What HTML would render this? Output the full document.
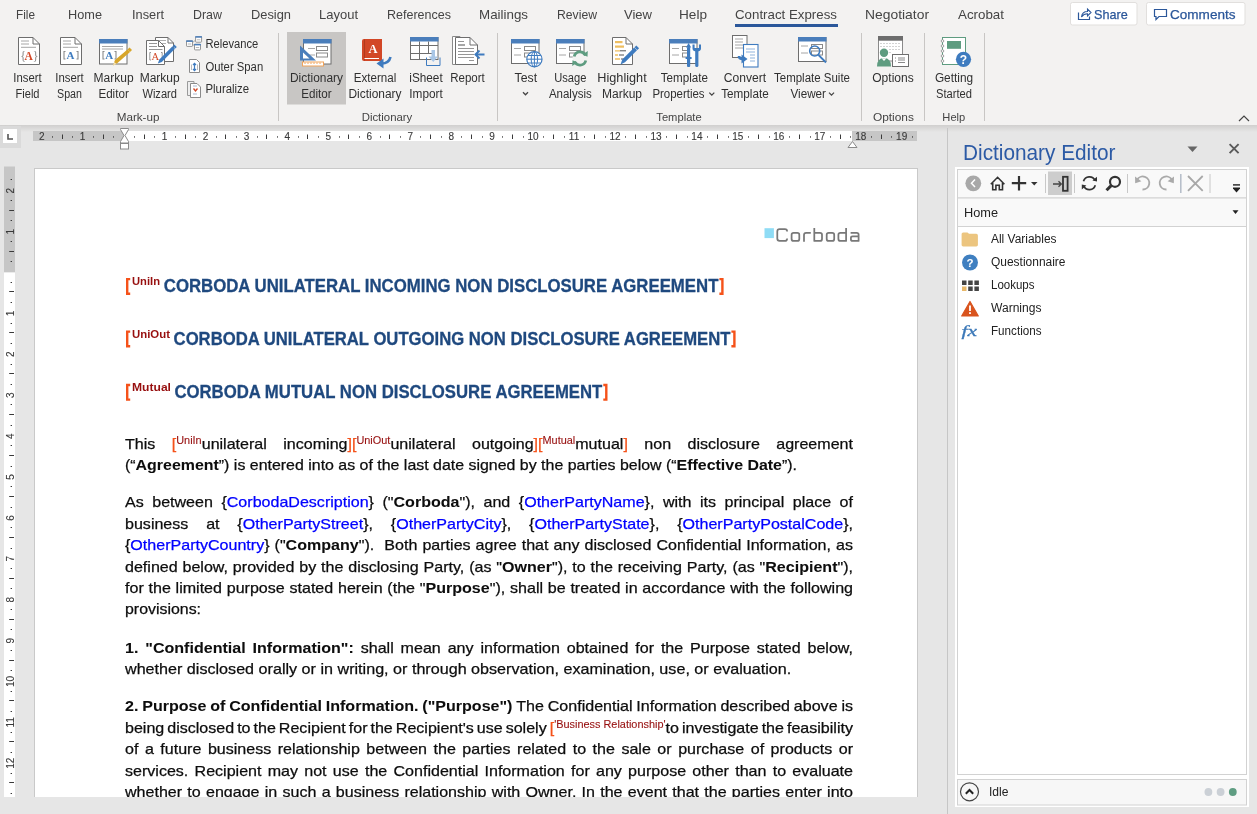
<!DOCTYPE html>
<html><head><meta charset="utf-8"><title>Word</title><style>
html,body{margin:0;padding:0;background:#e6e6e6;overflow:hidden;width:1257px;height:814px}
svg{display:block;font-family:"Liberation Sans",sans-serif;will-change:transform}
</style></head><body>
<svg width="1257" height="814" viewBox="0 0 1257 814">
<rect x="0" y="0" width="1257" height="125" fill="#f3f2f1"/>
<rect x="0" y="125" width="1257" height="689" fill="#e6e6e6"/>
<defs><linearGradient id="shd" x1="0" y1="0" x2="0" y2="1"><stop offset="0" stop-color="#d0cfce"/><stop offset="1" stop-color="#e6e6e6"/></linearGradient></defs>
<rect x="0" y="125" width="1257" height="7" fill="url(#shd)"/>
<text x="16" y="19" font-size="12.6" fill="#444444" textLength="19.00" lengthAdjust="spacingAndGlyphs">File</text>
<text x="68" y="19" font-size="12.6" fill="#444444" textLength="34.00" lengthAdjust="spacingAndGlyphs">Home</text>
<text x="132" y="19" font-size="12.6" fill="#444444" textLength="32.00" lengthAdjust="spacingAndGlyphs">Insert</text>
<text x="193" y="19" font-size="12.6" fill="#444444" textLength="29.00" lengthAdjust="spacingAndGlyphs">Draw</text>
<text x="251" y="19" font-size="12.6" fill="#444444" textLength="40.00" lengthAdjust="spacingAndGlyphs">Design</text>
<text x="319" y="19" font-size="12.6" fill="#444444" textLength="39.00" lengthAdjust="spacingAndGlyphs">Layout</text>
<text x="387" y="19" font-size="12.6" fill="#444444" textLength="64.00" lengthAdjust="spacingAndGlyphs">References</text>
<text x="479" y="19" font-size="12.6" fill="#444444" textLength="49.00" lengthAdjust="spacingAndGlyphs">Mailings</text>
<text x="557" y="19" font-size="12.6" fill="#444444" textLength="40.00" lengthAdjust="spacingAndGlyphs">Review</text>
<text x="624" y="19" font-size="12.6" fill="#444444" textLength="28.00" lengthAdjust="spacingAndGlyphs">View</text>
<text x="679" y="19" font-size="12.6" fill="#444444" textLength="28.00" lengthAdjust="spacingAndGlyphs">Help</text>
<text x="735" y="19" font-size="12.6" fill="#444444" textLength="102.00" lengthAdjust="spacingAndGlyphs">Contract Express</text>
<text x="865" y="19" font-size="12.6" fill="#444444" textLength="64.00" lengthAdjust="spacingAndGlyphs">Negotiator</text>
<text x="958" y="19" font-size="12.6" fill="#444444" textLength="46.00" lengthAdjust="spacingAndGlyphs">Acrobat</text>
<rect x="735" y="24" width="103" height="3" fill="#2b579a"/>
<rect x="1070.5" y="2.5" width="66.5" height="22.5" fill="#ffffff" stroke="#e1dfdd" stroke-width="1" rx="2"/>
<rect x="1146.5" y="2.5" width="98.5" height="22.5" fill="#ffffff" stroke="#e1dfdd" stroke-width="1" rx="2"/>
<text x="1094" y="18.8" font-size="12.8" fill="#2b579a" textLength="33.70" lengthAdjust="spacingAndGlyphs" stroke="#2b579a" stroke-width="0.25">Share</text>
<text x="1170" y="18.8" font-size="12.8" fill="#2b579a" textLength="65.50" lengthAdjust="spacingAndGlyphs" stroke="#2b579a" stroke-width="0.25">Comments</text>
<path d="M1078.5,12.5 V19.5 H1089.5 V16.5" fill="none" stroke="#2b579a" stroke-width="1.2"/>
<path d="M1081.5,17 C1082,13 1084.5,11.5 1087.5,11.5 V9 L1091,12.5 L1087.5,16 V13.8 C1085,13.8 1083,14.8 1081.5,17 Z" fill="none" stroke="#2b579a" stroke-width="1.1"/>
<path d="M1154.5,9.5 H1166.5 V16.5 H1159 L1156,19.5 V16.5 H1154.5 Z" fill="none" stroke="#2b579a" stroke-width="1.2"/>
<rect x="287" y="32" width="59" height="72.5" fill="#c8c6c4"/>
<text x="13.35" y="81.6" font-size="12" fill="#303030" textLength="28.30" lengthAdjust="spacingAndGlyphs">Insert</text>
<text x="15.5" y="97.8" font-size="12" fill="#303030" textLength="24.00" lengthAdjust="spacingAndGlyphs">Field</text>
<text x="55.3" y="81.6" font-size="12" fill="#303030" textLength="28.40" lengthAdjust="spacingAndGlyphs">Insert</text>
<text x="57.05" y="97.8" font-size="12" fill="#303030" textLength="24.90" lengthAdjust="spacingAndGlyphs">Span</text>
<text x="93.6" y="81.6" font-size="12" fill="#303030" textLength="40.00" lengthAdjust="spacingAndGlyphs">Markup</text>
<text x="98.39999999999999" y="97.8" font-size="12" fill="#303030" textLength="30.40" lengthAdjust="spacingAndGlyphs">Editor</text>
<text x="139.7" y="81.6" font-size="12" fill="#303030" textLength="40.00" lengthAdjust="spacingAndGlyphs">Markup</text>
<text x="142.45" y="97.8" font-size="12" fill="#303030" textLength="34.50" lengthAdjust="spacingAndGlyphs">Wizard</text>
<text x="290.0" y="81.6" font-size="12" fill="#303030" textLength="53.00" lengthAdjust="spacingAndGlyphs">Dictionary</text>
<text x="301.3" y="97.8" font-size="12" fill="#303030" textLength="30.40" lengthAdjust="spacingAndGlyphs">Editor</text>
<text x="353.75" y="81.6" font-size="12" fill="#303030" textLength="42.50" lengthAdjust="spacingAndGlyphs">External</text>
<text x="348.5" y="97.8" font-size="12" fill="#303030" textLength="53.00" lengthAdjust="spacingAndGlyphs">Dictionary</text>
<text x="409.3" y="81.6" font-size="12" fill="#303030" textLength="33.40" lengthAdjust="spacingAndGlyphs">iSheet</text>
<text x="409.25" y="97.8" font-size="12" fill="#303030" textLength="33.50" lengthAdjust="spacingAndGlyphs">Import</text>
<text x="450.25" y="81.6" font-size="12" fill="#303030" textLength="34.50" lengthAdjust="spacingAndGlyphs">Report</text>
<text x="514.55" y="81.6" font-size="12" fill="#303030" textLength="22.50" lengthAdjust="spacingAndGlyphs">Test</text>
<text x="554.1999999999999" y="81.6" font-size="12" fill="#303030" textLength="32.20" lengthAdjust="spacingAndGlyphs">Usage</text>
<text x="548.9" y="97.8" font-size="12" fill="#303030" textLength="42.80" lengthAdjust="spacingAndGlyphs">Analysis</text>
<text x="597.3" y="81.6" font-size="12" fill="#303030" textLength="49.40" lengthAdjust="spacingAndGlyphs">Highlight</text>
<text x="602.0" y="97.8" font-size="12" fill="#303030" textLength="40.00" lengthAdjust="spacingAndGlyphs">Markup</text>
<text x="660.8" y="81.6" font-size="12" fill="#303030" textLength="47.20" lengthAdjust="spacingAndGlyphs">Template</text>
<text x="723.85" y="81.6" font-size="12" fill="#303030" textLength="42.30" lengthAdjust="spacingAndGlyphs">Convert</text>
<text x="721.25" y="97.8" font-size="12" fill="#303030" textLength="47.50" lengthAdjust="spacingAndGlyphs">Template</text>
<text x="774.0" y="81.6" font-size="12" fill="#303030" textLength="76.00" lengthAdjust="spacingAndGlyphs">Template Suite</text>
<text x="872.25" y="81.6" font-size="12" fill="#303030" textLength="41.50" lengthAdjust="spacingAndGlyphs">Options</text>
<text x="934.9" y="81.6" font-size="12" fill="#303030" textLength="38.20" lengthAdjust="spacingAndGlyphs">Getting</text>
<text x="936.0" y="97.8" font-size="12" fill="#303030" textLength="36.00" lengthAdjust="spacingAndGlyphs">Started</text>
<text x="652.4" y="97.8" font-size="12" fill="#303030" textLength="52.20" lengthAdjust="spacingAndGlyphs">Properties</text>
<path d="M709.3,92.6 L711.8,95.1 L714.3,92.6" fill="none" stroke="#444" stroke-width="1.3"/>
<text x="790.5" y="97.8" font-size="12" fill="#303030" textLength="35.50" lengthAdjust="spacingAndGlyphs">Viewer</text>
<path d="M829,92.6 L831.5,95.1 L834,92.6" fill="none" stroke="#444" stroke-width="1.3"/>
<path d="M523,92.3 L525.5,94.8 L528,92.3" fill="none" stroke="#444" stroke-width="1.3"/>
<text x="205.4" y="47.9" font-size="12" fill="#303030" textLength="52.90" lengthAdjust="spacingAndGlyphs">Relevance</text>
<text x="205.4" y="70.6" font-size="12" fill="#303030" textLength="57.80" lengthAdjust="spacingAndGlyphs">Outer Span</text>
<text x="205.4" y="93.2" font-size="12" fill="#303030" textLength="43.80" lengthAdjust="spacingAndGlyphs">Pluralize</text>
<text x="116.69999999999999" y="120.7" font-size="11" fill="#444444" textLength="42.80" lengthAdjust="spacingAndGlyphs">Mark-up</text>
<text x="361.7" y="120.7" font-size="11" fill="#444444" textLength="50.60" lengthAdjust="spacingAndGlyphs">Dictionary</text>
<text x="656.3" y="120.7" font-size="11" fill="#444444" textLength="45.40" lengthAdjust="spacingAndGlyphs">Template</text>
<text x="872.9" y="120.7" font-size="11" fill="#444444" textLength="41.00" lengthAdjust="spacingAndGlyphs">Options</text>
<text x="942.3499999999999" y="120.7" font-size="11" fill="#444444" textLength="22.90" lengthAdjust="spacingAndGlyphs">Help</text>
<line x1="278.5" y1="33" x2="278.5" y2="121" stroke="#c8c6c4" stroke-width="1"/>
<line x1="497.5" y1="33" x2="497.5" y2="121" stroke="#c8c6c4" stroke-width="1"/>
<line x1="861.5" y1="33" x2="861.5" y2="121" stroke="#c8c6c4" stroke-width="1"/>
<line x1="924.5" y1="33" x2="924.5" y2="121" stroke="#c8c6c4" stroke-width="1"/>
<line x1="984.5" y1="33" x2="984.5" y2="121" stroke="#c8c6c4" stroke-width="1"/>
<path d="M1239,121 L1244,116 L1249,121" fill="none" stroke="#444" stroke-width="1.2"/>
<g id="ic-insertfield">
<path d="M18.5,37.5 H33 L39.5,44 V64.5 H18.5 Z" fill="#fff" stroke="#6e6e6e" stroke-width="1"/>
<path d="M33,37.5 V44 H39.5" fill="none" stroke="#6e6e6e" stroke-width="1"/>
<path d="M21,41 H29 M21,44 H29 M21,47.3 H36" stroke="#a6a6a6" stroke-width="1"/>
<text x="20.3" y="59.5" font-family="Liberation Serif" font-size="12" fill="#8c8c8c">{</text>
<text x="24.6" y="59.5" font-family="Liberation Serif" font-size="11.5" font-weight="bold" fill="#d24726">A</text>
<text x="32.8" y="59.5" font-family="Liberation Serif" font-size="12" fill="#8c8c8c">}</text>
</g>
<g id="ic-insertspan">
<path d="M60.5,37.5 H75 L81.5,44 V64.5 H60.5 Z" fill="#fff" stroke="#6e6e6e" stroke-width="1"/>
<path d="M75,37.5 V44 H81.5" fill="none" stroke="#6e6e6e" stroke-width="1"/>
<path d="M63,41 H71 M63,44 H71 M63,47.3 H78" stroke="#a6a6a6" stroke-width="1"/>
<path d="M65.5,51.5 H64 V59 H65.5 M76.5,51.5 H78 V59 H76.5" fill="none" stroke="#8c8c8c" stroke-width="1.1"/>
<text x="66.5" y="59" font-family="Liberation Serif" font-size="11" font-weight="bold" fill="#3e7bbf">A</text>
</g>
<g id="ic-markupeditor">
<rect x="99.5" y="39.5" width="27.5" height="24.5" fill="#fff" stroke="#6e6e6e" stroke-width="1"/>
<rect x="99" y="39" width="28.5" height="4.5" fill="#4a7ebb"/>
<path d="M102,46.5 H123 M102,49 H123" stroke="#a6a6a6" stroke-width="1"/>
<path d="M104.5,51.5 H103 V59 H104.5 M114.5,51.5 H116 V59 H114.5" fill="none" stroke="#8c8c8c" stroke-width="1.1"/>
<text x="105.3" y="59" font-family="Liberation Serif" font-size="11" font-weight="bold" fill="#3e7bbf">A</text>
<path d="M113,65.5 L115,60 L127.5,49.5 L130,52 L117.5,63 Z" fill="#d8a62a"/>
<path d="M127.5,49.5 L129.5,47.5 L132,50 L130,52 Z" fill="#d8a62a"/>
<path d="M113,65.5 L114.2,62 L116.5,64 Z" fill="#f3e2b5"/>
</g>
<g id="ic-markupwizard">
<path d="M155.5,37.5 H168 L173.5,43 V61.5 H155.5 Z" fill="#fff" stroke="#6e6e6e" stroke-width="1"/>
<path d="M168,37.5 V43 H173.5" fill="none" stroke="#6e6e6e" stroke-width="1"/>
<path d="M159,40.5 H166 M159,43.5 H166" stroke="#a6a6a6" stroke-width="0.9"/>
<path d="M146.5,40.5 H158.5 L164.5,46.5 V64.5 H146.5 Z" fill="#fff" stroke="#6e6e6e" stroke-width="1"/>
<path d="M158.5,40.5 V46.5 H164.5" fill="none" stroke="#6e6e6e" stroke-width="1"/>
<path d="M149,43.5 H157 M149,46.5 H157 M149,49.5 H162.5" stroke="#8a8a8a" stroke-width="0.9"/>
<path d="M151,52.5 H149.8 V60 H151 M161,52.5 H162.2 V60 H161" fill="none" stroke="#8c8c8c" stroke-width="0.9"/>
<text x="151.6" y="59.8" font-family="Liberation Serif" font-size="10.5" fill="#d24726">A</text>
<path d="M157.8,63.5 L159.3,59.5 L172.5,46.3 L175,48.8 L161.8,62 Z" fill="#3e7bbf"/>
<path d="M172.8,46 L174.3,44.5 L176.8,47 L175.3,48.5 Z" fill="#3e7bbf"/>
</g>
<g id="ic-relevance">
<rect x="186.5" y="40.8" width="6" height="5.6" rx="0.6" fill="#fff" stroke="#8a8a8a" stroke-width="0.9"/>
<rect x="186.1" y="40.4" width="6.8" height="1.5" fill="#4a7ebb"/>
<path d="M187.8,44 H191.2" stroke="#b0b0b0" stroke-width="0.9"/>
<rect x="195.6" y="36.6" width="6" height="5.6" rx="0.6" fill="#fff" stroke="#8a8a8a" stroke-width="0.9"/>
<rect x="195.2" y="36.2" width="6.8" height="1.5" fill="#4a7ebb"/>
<path d="M196.9,39.8 H200.3" stroke="#b0b0b0" stroke-width="0.9"/>
<rect x="194.5" y="44.3" width="6" height="5.6" rx="0.6" fill="#fff" stroke="#8a8a8a" stroke-width="0.9"/>
<rect x="194.1" y="43.9" width="6.8" height="1.5" fill="#4a7ebb"/>
<path d="M195.8,47.5 H199.2" stroke="#b0b0b0" stroke-width="0.9"/>
<path d="M192.6,42.5 L195.5,40.2 M192.6,44 L194.4,46" fill="none" stroke="#9a9a9a" stroke-width="0.8"/>
</g>
<g id="ic-outerspan">
<path d="M189.5,59.5 H196.5 L199.5,62.5 V72.5 H189.5 Z" fill="#fff" stroke="#8a8a8a" stroke-width="1"/>
<path d="M191.5,64.5 V70 M197.5,64.5 V70" stroke="#aaa" stroke-width="0.8"/>
<path d="M194.5,63.5 V70.5 M193,65 L194.5,63.3 L196,65 M193,69 L194.5,70.7 L196,69" fill="none" stroke="#3e7bbf" stroke-width="1.2"/>
</g>
<g id="ic-pluralize">
<path d="M187.5,81.5 H194 V95.5 H187.5 Z" fill="#eee" stroke="#9a9a9a" stroke-width="1"/>
<path d="M190.5,83.5 H197 L200.5,87 V97.5 H190.5 Z" fill="#fff" stroke="#8a8a8a" stroke-width="1"/>
<path d="M193.5,88.5 L195.5,91 L197.5,88.5" fill="none" stroke="#d24726" stroke-width="1.3"/>
<path d="M193,86 H197 M193,94 H197" stroke="#a9b8d0" stroke-width="1"/>
</g>
<g id="ic-dicteditor">
<rect x="303.5" y="39.5" width="27.5" height="24.5" fill="#fff" stroke="#6e6e6e" stroke-width="1"/>
<rect x="303" y="39" width="28.5" height="4.5" fill="#4a7ebb"/>
<path d="M308,48.5 H315 M308,55 H315" stroke="#a6a6a6" stroke-width="1"/>
<rect x="316.5" y="46.5" width="11" height="4" fill="#fff" stroke="#8a8a8a" stroke-width="1"/>
<rect x="316.5" y="53" width="11" height="4" fill="#fff" stroke="#8a8a8a" stroke-width="1"/>
<path d="M300,45.5 L316,60.5 H300 Z" fill="#4a7ebb"/>
<path d="M303,52.5 L309.5,58.5 H303 Z" fill="#fff"/>
<rect x="302" y="61.5" width="22" height="5" fill="#f0a35a"/>
<rect x="303" y="62.5" width="20" height="3" fill="#fff"/>
<path d="M305,62.5 V64 M308,62.5 V64 M311,62.5 V64 M314,62.5 V64 M317,62.5 V64 M320,62.5 V64" stroke="#f0a35a" stroke-width="1"/>
</g>
<g id="ic-extdict">
<path d="M364,39 H382 V61 H364 Q362,61 362,59 V41 Q362,39 364,39 Z" fill="#d24726"/><path d="M364.5,39.5 V60.5" stroke="#b03a1c" stroke-width="1"/>
<path d="M364.5,58.5 H379" stroke="#fff" stroke-width="1"/>
<text x="368.5" y="52.5" font-family="Liberation Serif" font-size="12.5" font-weight="bold" fill="#fff">A</text>
<path d="M390.5,57 Q389,63.5 381.5,63.5" fill="none" stroke="#3e7bbf" stroke-width="2.6"/>
<path d="M383.5,58.5 L376.5,63.5 L383.5,68.5 Z" fill="#3e7bbf"/>
</g>
<g id="ic-isheet">
<rect x="410.5" y="37.5" width="27.5" height="22" fill="#fff" stroke="#6e6e6e" stroke-width="1"/>
<rect x="410" y="37" width="28.5" height="4.5" fill="#4a7ebb"/>
<path d="M410.5,45.5 H438 M410.5,53.5 H432 M419.5,41.5 V59.5 M428.5,41.5 V53.5" stroke="#6e6e6e" stroke-width="1"/>
<path d="M426.5,57.5 V65.5 H440 V57.5" fill="none" stroke="#3e7bbf" stroke-width="1"/>
<path d="M431.5,50 H435 V56.5 H438 L433.25,62 L428.5,56.5 H431.5 Z" fill="#a8c6e6"/>
</g>
<g id="ic-report">
<path d="M452.5,36.5 H460 V64.5 H452.5 Z" fill="#fff" stroke="#8a8a8a" stroke-width="1"/>
<path d="M455.5,37.5 H470 L477.5,45 V64.5 H455.5 Z" fill="#fff" stroke="#6e6e6e" stroke-width="1"/>
<path d="M470,37.5 V45 H477.5" fill="none" stroke="#6e6e6e" stroke-width="1"/>
<path d="M458,41.5 H464 M458,48.5 H474 M458,51.5 H474 M458,54.5 H474 M458,57.5 H474 M469,60.5 H474" stroke="#8a8a8a" stroke-width="0.9"/><rect x="458" y="44" width="7" height="2" fill="#a6a6a6"/>
<path d="M484.5,54.5 H476" stroke="#3e7bbf" stroke-width="2"/>
<path d="M479.5,50.5 L475.5,54.5 L479.5,58.5" fill="none" stroke="#3e7bbf" stroke-width="2"/>
</g>
<g id="ic-test">
<rect x="511.5" y="39.5" width="27.5" height="24" fill="#fff" stroke="#6e6e6e" stroke-width="1"/>
<rect x="511" y="39" width="28.5" height="4.5" fill="#4a7ebb"/>
<path d="M514,48.5 H521 M514,55 H521" stroke="#a6a6a6" stroke-width="1"/>
<rect x="524.5" y="46.5" width="11" height="4" fill="#fff" stroke="#8a8a8a" stroke-width="1"/>
<rect x="524.5" y="53" width="7" height="4" fill="#fff" stroke="#8a8a8a" stroke-width="1"/>
<circle cx="534.4" cy="59.2" r="7.6" fill="#fff" stroke="#3e7bbf" stroke-width="1.2"/>
<ellipse cx="534.4" cy="59.2" rx="3.2" ry="7.6" fill="none" stroke="#3e7bbf" stroke-width="1"/>
<path d="M526.8,59.2 H542 M528,55.5 H540.8 M528,63 H540.8 M534.4,51.6 V66.8" stroke="#3e7bbf" stroke-width="1"/>
</g>
<g id="ic-usage">
<rect x="556.5" y="39.5" width="27.5" height="24" fill="#fff" stroke="#6e6e6e" stroke-width="1"/>
<rect x="556" y="39" width="28.5" height="4.5" fill="#4a7ebb"/>
<path d="M559,48.5 H566 M559,55 H566" stroke="#a6a6a6" stroke-width="1"/>
<rect x="569.5" y="46.5" width="11" height="4" fill="#fff" stroke="#8a8a8a" stroke-width="1"/>
<rect x="569.5" y="53" width="7" height="4" fill="#fff" stroke="#8a8a8a" stroke-width="1"/>
<circle cx="580" cy="58.5" r="7.5" fill="#f3f2f1"/>
<path d="M574.2,56.5 A6,6 0 0 1 585.5,55.5 M585.8,60.5 A6,6 0 0 1 574.5,61.5" fill="none" stroke="#5e9c80" stroke-width="2.8"/>
<path d="M582.5,54.5 L587.5,56.8 L587.8,51 Z M577.5,62.5 L572.5,60.2 L572.2,66 Z" fill="#5e9c80"/>
</g>
<g id="ic-highlight">
<path d="M612.5,37.5 H626 L632.5,44 V64.5 H612.5 Z" fill="#fff" stroke="#6e6e6e" stroke-width="1"/>
<path d="M626,37.5 V44 H632.5" fill="none" stroke="#6e6e6e" stroke-width="1"/>
<rect x="615" y="41" width="7.5" height="2.2" fill="#eebe60"/>
<rect x="615" y="45.5" width="9" height="2.2" fill="#eebe60"/>
<path d="M615,50.8 H620 M615,55 H618 M615,59 H620" stroke="#eebe60" stroke-width="1.3"/>
<path d="M620,50.8 H626 M619,55 H624 M621,59 H626" stroke="#555" stroke-width="1"/>
<path d="M620.5,64.5 L622.3,59.5 L634.2,47.5 L637,50.3 L625,62.2 Z" fill="#3e7bbf"/>
<path d="M634.5,47.2 L636.3,45.4 L639.1,48.2 L637.3,50 Z" fill="#3e7bbf"/>
</g>
<g id="ic-tprops">
<rect x="669.5" y="39.5" width="27.5" height="24" fill="#fff" stroke="#6e6e6e" stroke-width="1"/>
<rect x="669" y="39" width="28.5" height="4.5" fill="#4a7ebb"/>
<path d="M672,48.5 H679 M672,55 H679" stroke="#a6a6a6" stroke-width="1"/>
<rect x="682.5" y="46.5" width="6" height="4" fill="#fff" stroke="#8a8a8a" stroke-width="1"/>
<rect x="682.5" y="53" width="6" height="4" fill="#fff" stroke="#8a8a8a" stroke-width="1"/>
<rect x="687" y="47" width="3.2" height="20" rx="1" fill="#3e7bbf"/>
<path d="M686,47.5 L688.6,43 L691.2,47.5 Z" fill="#3e7bbf"/>
<rect x="685.6" y="57" width="6" height="2" fill="#3e7bbf"/>
<rect x="695.2" y="49" width="3.2" height="18" rx="1.5" fill="#3e7bbf"/>
<path d="M692.5,44.5 V48.5 Q692.5,51.5 696.8,51.5 Q701,51.5 701,48.5 V44.5 L699,44.5 V48 H694.6 V44.5 Z" fill="#3e7bbf"/>
</g>
<g id="ic-convert">
<rect x="732.5" y="35.5" width="14.5" height="22" fill="#fff" stroke="#6e6e6e" stroke-width="1"/>
<path d="M735,39 H743 M735,42 H743 M735,45 H743 M735,48 H743" stroke="#a6a6a6" stroke-width="1"/>
<rect x="743.5" y="44.5" width="14.5" height="22.5" fill="#fff" stroke="#3e7bbf" stroke-width="1.1"/>
<path d="M746,49 H755 M746,52 H755 M750,55 H755 M750,58 H755 M750,61 H755" stroke="#8fb3dc" stroke-width="1"/>
<path d="M739,56 Q739,59 743,59" fill="none" stroke="#3e7bbf" stroke-width="2.6"/>
<path d="M741.5,54.5 L747.5,59 L741.5,63.5 Z" fill="#3e7bbf"/>
</g>
<g id="ic-viewer">
<rect x="798.5" y="37.5" width="27.5" height="24" fill="#fff" stroke="#6e6e6e" stroke-width="1"/>
<rect x="798" y="37" width="28.5" height="4.5" fill="#4a7ebb"/>
<path d="M801,46 H808 M801,53 H808" stroke="#a6a6a6" stroke-width="1"/>
<rect x="811.5" y="44.5" width="11" height="4" fill="#fff" stroke="#8a8a8a" stroke-width="1"/>
<rect x="811.5" y="51" width="11" height="4" fill="#fff" stroke="#8a8a8a" stroke-width="1"/>
<circle cx="814.7" cy="51" r="5" fill="none" stroke="#3e7bbf" stroke-width="1.6"/>
<path d="M818.5,55 L826,62.5" stroke="#3e7bbf" stroke-width="1.8"/>
</g>
<g id="ic-options">
<rect x="878.5" y="40" width="24" height="21" fill="#fff" stroke="#8a8a8a" stroke-width="1"/>
<rect x="878" y="36" width="25" height="4.5" fill="#6d6d6d"/>
<g fill="#a6a6a6">
<rect x="880.5" y="43" width="1" height="1"/><rect x="883.5" y="43" width="1" height="1"/><rect x="886.5" y="43" width="1" height="1"/><rect x="889.5" y="43" width="1" height="1"/><rect x="892.5" y="43" width="1" height="1"/><rect x="895.5" y="43" width="1" height="1"/><rect x="898.5" y="43" width="1" height="1"/>
<rect x="880.5" y="46" width="1" height="1"/><rect x="883.5" y="46" width="1" height="1"/><rect x="886.5" y="46" width="1" height="1"/><rect x="889.5" y="46" width="1" height="1"/><rect x="892.5" y="46" width="1" height="1"/><rect x="895.5" y="46" width="1" height="1"/><rect x="898.5" y="46" width="1" height="1"/>
<rect x="889.5" y="49" width="1" height="1"/><rect x="892.5" y="49" width="1" height="1"/><rect x="895.5" y="49" width="1" height="1"/><rect x="898.5" y="49" width="1" height="1"/>
<rect x="889.5" y="52" width="1" height="1"/>
</g>
<circle cx="884" cy="52.8" r="4.2" fill="#5e9c80" stroke="#f3f2f1" stroke-width="0"/>
<path d="M877,66.5 Q877,58 884,58 Q891,58 891,66.5 Z" fill="#5e9c80"/>
<path d="M881.5,58.3 L884,61 L886.5,58.3 Z" fill="#fff"/>
<rect x="892.5" y="54.5" width="16" height="12" fill="#fff" stroke="#6e6e6e" stroke-width="1"/>
<path d="M895,58 H896 M895,61 H896 M898,58 H905 M898,60 H905 M898,62.5 H905" stroke="#8a8a8a" stroke-width="1"/>
</g>
<g id="ic-getting">
<rect x="942.5" y="37.5" width="23" height="27" fill="#fff" stroke="#5e9c80" stroke-width="1"/>
<g fill="#fff" stroke="#8a8a8a" stroke-width="0.8">
<circle cx="942.5" cy="41" r="1.3"/><circle cx="942.5" cy="46" r="1.3"/><circle cx="942.5" cy="51" r="1.3"/><circle cx="942.5" cy="56" r="1.3"/><circle cx="942.5" cy="61" r="1.3"/>
</g>
<rect x="947" y="41" width="14" height="7.8" fill="#5e9c80"/>
<circle cx="963.5" cy="59.3" r="7.6" fill="#3e7bbf"/>
<text x="963.5" y="63.8" font-size="12" font-weight="bold" fill="#fff" text-anchor="middle">?</text>
</g>

<rect x="0" y="126" width="21" height="22" fill="#dadada"/>
<rect x="3" y="129" width="14" height="14" fill="#ffffff"/>
<path d="M8,134 V139 H13" fill="none" stroke="#555" stroke-width="1.6"/>
<rect x="33" y="131" width="91.5" height="10" fill="#c6c6c6"/>
<rect x="124.5" y="131" width="727.5" height="10" fill="#ffffff"/>
<rect x="852" y="131" width="65" height="10" fill="#c6c6c6"/>
<text x="164.55" y="139.8" font-size="10" fill="#3a3a3a" text-anchor="middle" stroke="#3a3a3a" stroke-width="0.12">1</text>
<text x="205.5" y="139.8" font-size="10" fill="#3a3a3a" text-anchor="middle" stroke="#3a3a3a" stroke-width="0.12">2</text>
<text x="246.45" y="139.8" font-size="10" fill="#3a3a3a" text-anchor="middle" stroke="#3a3a3a" stroke-width="0.12">3</text>
<text x="287.4" y="139.8" font-size="10" fill="#3a3a3a" text-anchor="middle" stroke="#3a3a3a" stroke-width="0.12">4</text>
<text x="328.35" y="139.8" font-size="10" fill="#3a3a3a" text-anchor="middle" stroke="#3a3a3a" stroke-width="0.12">5</text>
<text x="369.3" y="139.8" font-size="10" fill="#3a3a3a" text-anchor="middle" stroke="#3a3a3a" stroke-width="0.12">6</text>
<text x="410.25" y="139.8" font-size="10" fill="#3a3a3a" text-anchor="middle" stroke="#3a3a3a" stroke-width="0.12">7</text>
<text x="451.20000000000005" y="139.8" font-size="10" fill="#3a3a3a" text-anchor="middle" stroke="#3a3a3a" stroke-width="0.12">8</text>
<text x="492.15" y="139.8" font-size="10" fill="#3a3a3a" text-anchor="middle" stroke="#3a3a3a" stroke-width="0.12">9</text>
<text x="533.1" y="139.8" font-size="10" fill="#3a3a3a" text-anchor="middle" stroke="#3a3a3a" stroke-width="0.12">10</text>
<text x="574.0500000000001" y="139.8" font-size="10" fill="#3a3a3a" text-anchor="middle" stroke="#3a3a3a" stroke-width="0.12">11</text>
<text x="615.0" y="139.8" font-size="10" fill="#3a3a3a" text-anchor="middle" stroke="#3a3a3a" stroke-width="0.12">12</text>
<text x="655.95" y="139.8" font-size="10" fill="#3a3a3a" text-anchor="middle" stroke="#3a3a3a" stroke-width="0.12">13</text>
<text x="696.9000000000001" y="139.8" font-size="10" fill="#3a3a3a" text-anchor="middle" stroke="#3a3a3a" stroke-width="0.12">14</text>
<text x="737.85" y="139.8" font-size="10" fill="#3a3a3a" text-anchor="middle" stroke="#3a3a3a" stroke-width="0.12">15</text>
<text x="778.8000000000001" y="139.8" font-size="10" fill="#3a3a3a" text-anchor="middle" stroke="#3a3a3a" stroke-width="0.12">16</text>
<text x="819.7500000000001" y="139.8" font-size="10" fill="#3a3a3a" text-anchor="middle" stroke="#3a3a3a" stroke-width="0.12">17</text>
<text x="860.7" y="139.8" font-size="10" fill="#3a3a3a" text-anchor="middle" stroke="#3a3a3a" stroke-width="0.12">18</text>
<text x="901.6500000000001" y="139.8" font-size="10" fill="#3a3a3a" text-anchor="middle" stroke="#3a3a3a" stroke-width="0.12">19</text>
<text x="82.64999999999999" y="139.8" font-size="10" fill="#3a3a3a" text-anchor="middle" stroke="#3a3a3a" stroke-width="0.12">1</text>
<text x="41.69999999999999" y="139.8" font-size="10" fill="#3a3a3a" text-anchor="middle" stroke="#3a3a3a" stroke-width="0.12">2</text>
<rect x="52" y="136.3" width="1" height="1.3" fill="#3a3a3a"/>
<line x1="62.5" y1="134.5" x2="62.5" y2="139" stroke="#3a3a3a" stroke-width="1"/>
<rect x="72" y="136.3" width="1" height="1.3" fill="#3a3a3a"/>
<rect x="93" y="136.3" width="1" height="1.3" fill="#3a3a3a"/>
<line x1="103.5" y1="134.5" x2="103.5" y2="139" stroke="#3a3a3a" stroke-width="1"/>
<rect x="113" y="136.3" width="1" height="1.3" fill="#3a3a3a"/>
<rect x="134" y="136.3" width="1" height="1.3" fill="#3a3a3a"/>
<line x1="144.5" y1="134.5" x2="144.5" y2="139" stroke="#3a3a3a" stroke-width="1"/>
<rect x="154" y="136.3" width="1" height="1.3" fill="#3a3a3a"/>
<rect x="175" y="136.3" width="1" height="1.3" fill="#3a3a3a"/>
<line x1="185.5" y1="134.5" x2="185.5" y2="139" stroke="#3a3a3a" stroke-width="1"/>
<rect x="195" y="136.3" width="1" height="1.3" fill="#3a3a3a"/>
<rect x="216" y="136.3" width="1" height="1.3" fill="#3a3a3a"/>
<line x1="225.5" y1="134.5" x2="225.5" y2="139" stroke="#3a3a3a" stroke-width="1"/>
<rect x="236" y="136.3" width="1" height="1.3" fill="#3a3a3a"/>
<rect x="257" y="136.3" width="1" height="1.3" fill="#3a3a3a"/>
<line x1="266.5" y1="134.5" x2="266.5" y2="139" stroke="#3a3a3a" stroke-width="1"/>
<rect x="277" y="136.3" width="1" height="1.3" fill="#3a3a3a"/>
<rect x="298" y="136.3" width="1" height="1.3" fill="#3a3a3a"/>
<line x1="307.5" y1="134.5" x2="307.5" y2="139" stroke="#3a3a3a" stroke-width="1"/>
<rect x="318" y="136.3" width="1" height="1.3" fill="#3a3a3a"/>
<rect x="339" y="136.3" width="1" height="1.3" fill="#3a3a3a"/>
<line x1="348.5" y1="134.5" x2="348.5" y2="139" stroke="#3a3a3a" stroke-width="1"/>
<rect x="359" y="136.3" width="1" height="1.3" fill="#3a3a3a"/>
<rect x="380" y="136.3" width="1" height="1.3" fill="#3a3a3a"/>
<line x1="389.5" y1="134.5" x2="389.5" y2="139" stroke="#3a3a3a" stroke-width="1"/>
<rect x="400" y="136.3" width="1" height="1.3" fill="#3a3a3a"/>
<rect x="420" y="136.3" width="1" height="1.3" fill="#3a3a3a"/>
<line x1="430.5" y1="134.5" x2="430.5" y2="139" stroke="#3a3a3a" stroke-width="1"/>
<rect x="441" y="136.3" width="1" height="1.3" fill="#3a3a3a"/>
<rect x="461" y="136.3" width="1" height="1.3" fill="#3a3a3a"/>
<line x1="471.5" y1="134.5" x2="471.5" y2="139" stroke="#3a3a3a" stroke-width="1"/>
<rect x="482" y="136.3" width="1" height="1.3" fill="#3a3a3a"/>
<rect x="502" y="136.3" width="1" height="1.3" fill="#3a3a3a"/>
<line x1="512.5" y1="134.5" x2="512.5" y2="139" stroke="#3a3a3a" stroke-width="1"/>
<rect x="523" y="136.3" width="1" height="1.3" fill="#3a3a3a"/>
<rect x="543" y="136.3" width="1" height="1.3" fill="#3a3a3a"/>
<line x1="553.5" y1="134.5" x2="553.5" y2="139" stroke="#3a3a3a" stroke-width="1"/>
<rect x="564" y="136.3" width="1" height="1.3" fill="#3a3a3a"/>
<rect x="584" y="136.3" width="1" height="1.3" fill="#3a3a3a"/>
<line x1="594.5" y1="134.5" x2="594.5" y2="139" stroke="#3a3a3a" stroke-width="1"/>
<rect x="605" y="136.3" width="1" height="1.3" fill="#3a3a3a"/>
<rect x="625" y="136.3" width="1" height="1.3" fill="#3a3a3a"/>
<line x1="635.5" y1="134.5" x2="635.5" y2="139" stroke="#3a3a3a" stroke-width="1"/>
<rect x="646" y="136.3" width="1" height="1.3" fill="#3a3a3a"/>
<rect x="666" y="136.3" width="1" height="1.3" fill="#3a3a3a"/>
<line x1="676.5" y1="134.5" x2="676.5" y2="139" stroke="#3a3a3a" stroke-width="1"/>
<rect x="687" y="136.3" width="1" height="1.3" fill="#3a3a3a"/>
<rect x="707" y="136.3" width="1" height="1.3" fill="#3a3a3a"/>
<line x1="717.5" y1="134.5" x2="717.5" y2="139" stroke="#3a3a3a" stroke-width="1"/>
<rect x="728" y="136.3" width="1" height="1.3" fill="#3a3a3a"/>
<rect x="748" y="136.3" width="1" height="1.3" fill="#3a3a3a"/>
<line x1="758.5" y1="134.5" x2="758.5" y2="139" stroke="#3a3a3a" stroke-width="1"/>
<rect x="769" y="136.3" width="1" height="1.3" fill="#3a3a3a"/>
<rect x="789" y="136.3" width="1" height="1.3" fill="#3a3a3a"/>
<line x1="799.5" y1="134.5" x2="799.5" y2="139" stroke="#3a3a3a" stroke-width="1"/>
<rect x="810" y="136.3" width="1" height="1.3" fill="#3a3a3a"/>
<rect x="830" y="136.3" width="1" height="1.3" fill="#3a3a3a"/>
<line x1="840.5" y1="134.5" x2="840.5" y2="139" stroke="#3a3a3a" stroke-width="1"/>
<rect x="850" y="136.3" width="1" height="1.3" fill="#3a3a3a"/>
<rect x="871" y="136.3" width="1" height="1.3" fill="#3a3a3a"/>
<line x1="881.5" y1="134.5" x2="881.5" y2="139" stroke="#3a3a3a" stroke-width="1"/>
<rect x="891" y="136.3" width="1" height="1.3" fill="#3a3a3a"/>
<rect x="912" y="136.3" width="1" height="1.3" fill="#3a3a3a"/>
<path d="M120.5,128.5 H128.5 V129.5 L125,135.5 L128.5,141.5 V143 H120.5 V141.5 L124,135.5 L120.5,129.5 Z" fill="#ffffff" stroke="#8a8a8a" stroke-width="1"/>
<rect x="120.5" y="143.5" width="8" height="5.5" fill="#ffffff" stroke="#8a8a8a" stroke-width="1"/>
<path d="M848,147.5 L852.5,141.5 L857,147.5 Z" fill="#ffffff" stroke="#8a8a8a" stroke-width="1"/>
<rect x="4" y="166.5" width="11" height="106" fill="#c6c6c6"/>
<rect x="4" y="272.5" width="11" height="524.5" fill="#ffffff"/>
<text transform="translate(13.8,313.4) rotate(-90)" x="0" y="0" font-size="10" fill="#3a3a3a" stroke="#3a3a3a" stroke-width="0.12" text-anchor="middle">1</text>
<text transform="translate(13.8,354.3) rotate(-90)" x="0" y="0" font-size="10" fill="#3a3a3a" stroke="#3a3a3a" stroke-width="0.12" text-anchor="middle">2</text>
<text transform="translate(13.8,395.2) rotate(-90)" x="0" y="0" font-size="10" fill="#3a3a3a" stroke="#3a3a3a" stroke-width="0.12" text-anchor="middle">3</text>
<text transform="translate(13.8,436.1) rotate(-90)" x="0" y="0" font-size="10" fill="#3a3a3a" stroke="#3a3a3a" stroke-width="0.12" text-anchor="middle">4</text>
<text transform="translate(13.8,477.0) rotate(-90)" x="0" y="0" font-size="10" fill="#3a3a3a" stroke="#3a3a3a" stroke-width="0.12" text-anchor="middle">5</text>
<text transform="translate(13.8,517.9) rotate(-90)" x="0" y="0" font-size="10" fill="#3a3a3a" stroke="#3a3a3a" stroke-width="0.12" text-anchor="middle">6</text>
<text transform="translate(13.8,558.8) rotate(-90)" x="0" y="0" font-size="10" fill="#3a3a3a" stroke="#3a3a3a" stroke-width="0.12" text-anchor="middle">7</text>
<text transform="translate(13.8,599.7) rotate(-90)" x="0" y="0" font-size="10" fill="#3a3a3a" stroke="#3a3a3a" stroke-width="0.12" text-anchor="middle">8</text>
<text transform="translate(13.8,640.5999999999999) rotate(-90)" x="0" y="0" font-size="10" fill="#3a3a3a" stroke="#3a3a3a" stroke-width="0.12" text-anchor="middle">9</text>
<text transform="translate(13.8,681.5) rotate(-90)" x="0" y="0" font-size="10" fill="#3a3a3a" stroke="#3a3a3a" stroke-width="0.12" text-anchor="middle">10</text>
<text transform="translate(13.8,722.4) rotate(-90)" x="0" y="0" font-size="10" fill="#3a3a3a" stroke="#3a3a3a" stroke-width="0.12" text-anchor="middle">11</text>
<text transform="translate(13.8,763.3) rotate(-90)" x="0" y="0" font-size="10" fill="#3a3a3a" stroke="#3a3a3a" stroke-width="0.12" text-anchor="middle">12</text>
<text transform="translate(13.8,231.6) rotate(-90)" x="0" y="0" font-size="10" fill="#3a3a3a" stroke="#3a3a3a" stroke-width="0.12" text-anchor="middle">1</text>
<text transform="translate(13.8,190.7) rotate(-90)" x="0" y="0" font-size="10" fill="#3a3a3a" stroke="#3a3a3a" stroke-width="0.12" text-anchor="middle">2</text>
<rect x="10.6" y="179" width="1.4" height="1" fill="#3a3a3a"/>
<rect x="10.6" y="200" width="1.4" height="1" fill="#3a3a3a"/>
<line x1="9.2" y1="210.5" x2="14" y2="210.5" stroke="#3a3a3a" stroke-width="1"/>
<rect x="10.6" y="220" width="1.4" height="1" fill="#3a3a3a"/>
<rect x="10.6" y="241" width="1.4" height="1" fill="#3a3a3a"/>
<line x1="9.2" y1="251.5" x2="14" y2="251.5" stroke="#3a3a3a" stroke-width="1"/>
<rect x="10.6" y="261" width="1.4" height="1" fill="#3a3a3a"/>
<rect x="10.6" y="282" width="1.4" height="1" fill="#3a3a3a"/>
<line x1="9.2" y1="291.5" x2="14" y2="291.5" stroke="#3a3a3a" stroke-width="1"/>
<rect x="10.6" y="302" width="1.4" height="1" fill="#3a3a3a"/>
<rect x="10.6" y="323" width="1.4" height="1" fill="#3a3a3a"/>
<line x1="9.2" y1="332.5" x2="14" y2="332.5" stroke="#3a3a3a" stroke-width="1"/>
<rect x="10.6" y="343" width="1.4" height="1" fill="#3a3a3a"/>
<rect x="10.6" y="364" width="1.4" height="1" fill="#3a3a3a"/>
<line x1="9.2" y1="373.5" x2="14" y2="373.5" stroke="#3a3a3a" stroke-width="1"/>
<rect x="10.6" y="384" width="1.4" height="1" fill="#3a3a3a"/>
<rect x="10.6" y="404" width="1.4" height="1" fill="#3a3a3a"/>
<line x1="9.2" y1="414.5" x2="14" y2="414.5" stroke="#3a3a3a" stroke-width="1"/>
<rect x="10.6" y="425" width="1.4" height="1" fill="#3a3a3a"/>
<rect x="10.6" y="445" width="1.4" height="1" fill="#3a3a3a"/>
<line x1="9.2" y1="455.5" x2="14" y2="455.5" stroke="#3a3a3a" stroke-width="1"/>
<rect x="10.6" y="466" width="1.4" height="1" fill="#3a3a3a"/>
<rect x="10.6" y="486" width="1.4" height="1" fill="#3a3a3a"/>
<line x1="9.2" y1="496.5" x2="14" y2="496.5" stroke="#3a3a3a" stroke-width="1"/>
<rect x="10.6" y="507" width="1.4" height="1" fill="#3a3a3a"/>
<rect x="10.6" y="527" width="1.4" height="1" fill="#3a3a3a"/>
<line x1="9.2" y1="537.5" x2="14" y2="537.5" stroke="#3a3a3a" stroke-width="1"/>
<rect x="10.6" y="548" width="1.4" height="1" fill="#3a3a3a"/>
<rect x="10.6" y="568" width="1.4" height="1" fill="#3a3a3a"/>
<line x1="9.2" y1="578.5" x2="14" y2="578.5" stroke="#3a3a3a" stroke-width="1"/>
<rect x="10.6" y="588" width="1.4" height="1" fill="#3a3a3a"/>
<rect x="10.6" y="609" width="1.4" height="1" fill="#3a3a3a"/>
<line x1="9.2" y1="619.5" x2="14" y2="619.5" stroke="#3a3a3a" stroke-width="1"/>
<rect x="10.6" y="629" width="1.4" height="1" fill="#3a3a3a"/>
<rect x="10.6" y="650" width="1.4" height="1" fill="#3a3a3a"/>
<line x1="9.2" y1="660.5" x2="14" y2="660.5" stroke="#3a3a3a" stroke-width="1"/>
<rect x="10.6" y="670" width="1.4" height="1" fill="#3a3a3a"/>
<rect x="10.6" y="691" width="1.4" height="1" fill="#3a3a3a"/>
<line x1="9.2" y1="700.5" x2="14" y2="700.5" stroke="#3a3a3a" stroke-width="1"/>
<rect x="10.6" y="711" width="1.4" height="1" fill="#3a3a3a"/>
<rect x="10.6" y="732" width="1.4" height="1" fill="#3a3a3a"/>
<line x1="9.2" y1="741.5" x2="14" y2="741.5" stroke="#3a3a3a" stroke-width="1"/>
<rect x="10.6" y="752" width="1.4" height="1" fill="#3a3a3a"/>
<rect x="10.6" y="773" width="1.4" height="1" fill="#3a3a3a"/>
<line x1="9.2" y1="782.5" x2="14" y2="782.5" stroke="#3a3a3a" stroke-width="1"/>
<rect x="10.6" y="793" width="1.4" height="1" fill="#3a3a3a"/>
<rect x="34.5" y="168.5" width="883" height="640" fill="#ffffff" stroke="#c9c9c9" stroke-width="1"/>
<text x="125.00" y="448.8" font-size="15.0" fill="#0d0d0d" stroke="#0d0d0d" stroke-width="0.25" textLength="30.33" lengthAdjust="spacingAndGlyphs"><tspan>This</tspan></text>
<text x="171.78" y="448.8" font-size="15.0" fill="#0d0d0d" stroke="#0d0d0d" stroke-width="0.25" textLength="95.06" lengthAdjust="spacingAndGlyphs"><tspan fill="#f5521a" stroke="#f5521a">[</tspan><tspan dy="-5.2" font-size="10.2" fill="#970f0f" stroke="#970f0f" stroke-width="0.1">UniIn</tspan><tspan dy="5.2">unilateral</tspan></text>
<text x="283.29" y="448.8" font-size="15.0" fill="#0d0d0d" stroke="#0d0d0d" stroke-width="0.25" textLength="172.24" lengthAdjust="spacingAndGlyphs"><tspan>incoming</tspan><tspan fill="#f5521a" stroke="#f5521a">]</tspan><tspan fill="#f5521a" stroke="#f5521a">[</tspan><tspan dy="-5.2" font-size="10.2" fill="#970f0f" stroke="#970f0f" stroke-width="0.1">UniOut</tspan><tspan dy="5.2">unilateral</tspan></text>
<text x="471.98" y="448.8" font-size="15.0" fill="#0d0d0d" stroke="#0d0d0d" stroke-width="0.25" textLength="155.89" lengthAdjust="spacingAndGlyphs"><tspan>outgoing</tspan><tspan fill="#f5521a" stroke="#f5521a">]</tspan><tspan fill="#f5521a" stroke="#f5521a">[</tspan><tspan dy="-5.2" font-size="10.2" fill="#970f0f" stroke="#970f0f" stroke-width="0.1">Mutual</tspan><tspan dy="5.2">mutual</tspan><tspan fill="#f5521a" stroke="#f5521a">]</tspan></text>
<text x="644.32" y="448.8" font-size="15.0" fill="#0d0d0d" stroke="#0d0d0d" stroke-width="0.25" textLength="26.78" lengthAdjust="spacingAndGlyphs"><tspan>non</tspan></text>
<text x="687.55" y="448.8" font-size="15.0" fill="#0d0d0d" stroke="#0d0d0d" stroke-width="0.25" textLength="72.26" lengthAdjust="spacingAndGlyphs"><tspan>disclosure</tspan></text>
<text x="776.26" y="448.8" font-size="15.0" fill="#0d0d0d" stroke="#0d0d0d" stroke-width="0.25" textLength="76.74" lengthAdjust="spacingAndGlyphs"><tspan>agreement</tspan></text>
<text x="125.00" y="469.9" font-size="15.0" fill="#0d0d0d" stroke="#0d0d0d" stroke-width="0.25" textLength="104.42" lengthAdjust="spacingAndGlyphs"><tspan>(“</tspan><tspan font-weight="bold" stroke-width="0.05">Agreement</tspan><tspan>”)</tspan></text>
<text x="233.85" y="469.9" font-size="15.0" fill="#0d0d0d" stroke="#0d0d0d" stroke-width="0.25" textLength="11.51" lengthAdjust="spacingAndGlyphs"><tspan>is</tspan></text>
<text x="249.80" y="469.9" font-size="15.0" fill="#0d0d0d" stroke="#0d0d0d" stroke-width="0.25" textLength="54.01" lengthAdjust="spacingAndGlyphs"><tspan>entered</tspan></text>
<text x="308.24" y="469.9" font-size="15.0" fill="#0d0d0d" stroke="#0d0d0d" stroke-width="0.25" textLength="25.68" lengthAdjust="spacingAndGlyphs"><tspan>into</tspan></text>
<text x="338.34" y="469.9" font-size="15.0" fill="#0d0d0d" stroke="#0d0d0d" stroke-width="0.25" textLength="16.82" lengthAdjust="spacingAndGlyphs"><tspan>as</tspan></text>
<text x="359.59" y="469.9" font-size="15.0" fill="#0d0d0d" stroke="#0d0d0d" stroke-width="0.25" textLength="13.29" lengthAdjust="spacingAndGlyphs"><tspan>of</tspan></text>
<text x="377.31" y="469.9" font-size="15.0" fill="#0d0d0d" stroke="#0d0d0d" stroke-width="0.25" textLength="22.15" lengthAdjust="spacingAndGlyphs"><tspan>the</tspan></text>
<text x="403.89" y="469.9" font-size="15.0" fill="#0d0d0d" stroke="#0d0d0d" stroke-width="0.25" textLength="24.78" lengthAdjust="spacingAndGlyphs"><tspan>last</tspan></text>
<text x="433.10" y="469.9" font-size="15.0" fill="#0d0d0d" stroke="#0d0d0d" stroke-width="0.25" textLength="31.00" lengthAdjust="spacingAndGlyphs"><tspan>date</tspan></text>
<text x="468.53" y="469.9" font-size="15.0" fill="#0d0d0d" stroke="#0d0d0d" stroke-width="0.25" textLength="46.93" lengthAdjust="spacingAndGlyphs"><tspan>signed</tspan></text>
<text x="519.89" y="469.9" font-size="15.0" fill="#0d0d0d" stroke="#0d0d0d" stroke-width="0.25" textLength="16.82" lengthAdjust="spacingAndGlyphs"><tspan>by</tspan></text>
<text x="541.14" y="469.9" font-size="15.0" fill="#0d0d0d" stroke="#0d0d0d" stroke-width="0.25" textLength="22.15" lengthAdjust="spacingAndGlyphs"><tspan>the</tspan></text>
<text x="567.71" y="469.9" font-size="15.0" fill="#0d0d0d" stroke="#0d0d0d" stroke-width="0.25" textLength="47.81" lengthAdjust="spacingAndGlyphs"><tspan>parties</tspan></text>
<text x="619.95" y="469.9" font-size="15.0" fill="#0d0d0d" stroke="#0d0d0d" stroke-width="0.25" textLength="41.62" lengthAdjust="spacingAndGlyphs"><tspan>below</tspan></text>
<text x="666.00" y="469.9" font-size="15.0" fill="#0d0d0d" stroke="#0d0d0d" stroke-width="0.25" textLength="77.00" lengthAdjust="spacingAndGlyphs"><tspan>(“</tspan><tspan font-weight="bold" stroke-width="0.05">Effective</tspan></text>
<text x="747.43" y="469.9" font-size="15.0" fill="#0d0d0d" stroke="#0d0d0d" stroke-width="0.25" textLength="49.57" lengthAdjust="spacingAndGlyphs"><tspan font-weight="bold" stroke-width="0.05">Date</tspan><tspan>”).</tspan></text>
<text x="125.00" y="507.3" font-size="15.0" fill="#0d0d0d" stroke="#0d0d0d" stroke-width="0.25" textLength="18.74" lengthAdjust="spacingAndGlyphs"><tspan>As</tspan></text>
<text x="152.23" y="507.3" font-size="15.0" fill="#0d0d0d" stroke="#0d0d0d" stroke-width="0.25" textLength="60.69" lengthAdjust="spacingAndGlyphs"><tspan>between</tspan></text>
<text x="221.40" y="507.3" font-size="15.0" fill="#0d0d0d" stroke="#0d0d0d" stroke-width="0.25" textLength="152.59" lengthAdjust="spacingAndGlyphs"><tspan>{</tspan><tspan fill="#0000ff" stroke="#0000ff">CorbodaDescription</tspan><tspan>}</tspan></text>
<text x="382.48" y="507.3" font-size="15.0" fill="#0d0d0d" stroke="#0d0d0d" stroke-width="0.25" textLength="92.56" lengthAdjust="spacingAndGlyphs"><tspan>("</tspan><tspan font-weight="bold" stroke-width="0.05">Corboda</tspan><tspan>"),</tspan></text>
<text x="483.52" y="507.3" font-size="15.0" fill="#0d0d0d" stroke="#0d0d0d" stroke-width="0.25" textLength="26.78" lengthAdjust="spacingAndGlyphs"><tspan>and</tspan></text>
<text x="518.79" y="507.3" font-size="15.0" fill="#0d0d0d" stroke="#0d0d0d" stroke-width="0.25" textLength="135.62" lengthAdjust="spacingAndGlyphs"><tspan>{</tspan><tspan fill="#0000ff" stroke="#0000ff">OtherPartyName</tspan><tspan>}</tspan><tspan>,</tspan></text>
<text x="662.90" y="507.3" font-size="15.0" fill="#0d0d0d" stroke="#0d0d0d" stroke-width="0.25" textLength="28.56" lengthAdjust="spacingAndGlyphs"><tspan>with</tspan></text>
<text x="699.94" y="507.3" font-size="15.0" fill="#0d0d0d" stroke="#0d0d0d" stroke-width="0.25" textLength="16.05" lengthAdjust="spacingAndGlyphs"><tspan>its</tspan></text>
<text x="724.48" y="507.3" font-size="15.0" fill="#0d0d0d" stroke="#0d0d0d" stroke-width="0.25" textLength="59.79" lengthAdjust="spacingAndGlyphs"><tspan>principal</tspan></text>
<text x="792.75" y="507.3" font-size="15.0" fill="#0d0d0d" stroke="#0d0d0d" stroke-width="0.25" textLength="38.37" lengthAdjust="spacingAndGlyphs"><tspan>place</tspan></text>
<text x="839.61" y="507.3" font-size="15.0" fill="#0d0d0d" stroke="#0d0d0d" stroke-width="0.25" textLength="13.39" lengthAdjust="spacingAndGlyphs"><tspan>of</tspan></text>
<text x="125.00" y="528.7" font-size="15.0" fill="#0d0d0d" stroke="#0d0d0d" stroke-width="0.25" textLength="63.35" lengthAdjust="spacingAndGlyphs"><tspan>business</tspan></text>
<text x="206.17" y="528.7" font-size="15.0" fill="#0d0d0d" stroke="#0d0d0d" stroke-width="0.25" textLength="13.39" lengthAdjust="spacingAndGlyphs"><tspan>at</tspan></text>
<text x="237.39" y="528.7" font-size="15.0" fill="#0d0d0d" stroke="#0d0d0d" stroke-width="0.25" textLength="135.62" lengthAdjust="spacingAndGlyphs"><tspan>{</tspan><tspan fill="#0000ff" stroke="#0000ff">OtherPartyStreet</tspan><tspan>}</tspan><tspan>,</tspan></text>
<text x="390.84" y="528.7" font-size="15.0" fill="#0d0d0d" stroke="#0d0d0d" stroke-width="0.25" textLength="120.44" lengthAdjust="spacingAndGlyphs"><tspan>{</tspan><tspan fill="#0000ff" stroke="#0000ff">OtherPartyCity</tspan><tspan>}</tspan><tspan>,</tspan></text>
<text x="529.10" y="528.7" font-size="15.0" fill="#0d0d0d" stroke="#0d0d0d" stroke-width="0.25" textLength="130.29" lengthAdjust="spacingAndGlyphs"><tspan>{</tspan><tspan fill="#0000ff" stroke="#0000ff">OtherPartyState</tspan><tspan>}</tspan><tspan>,</tspan></text>
<text x="677.22" y="528.7" font-size="15.0" fill="#0d0d0d" stroke="#0d0d0d" stroke-width="0.25" textLength="175.78" lengthAdjust="spacingAndGlyphs"><tspan>{</tspan><tspan fill="#0000ff" stroke="#0000ff">OtherPartyPostalCode</tspan><tspan>}</tspan><tspan>,</tspan></text>
<text x="125.00" y="550.1" font-size="15.0" fill="#0d0d0d" stroke="#0d0d0d" stroke-width="0.25" textLength="144.53" lengthAdjust="spacingAndGlyphs"><tspan>{</tspan><tspan fill="#0000ff" stroke="#0000ff">OtherPartyCountry</tspan><tspan>}</tspan></text>
<text x="274.57" y="550.1" font-size="15.0" fill="#0d0d0d" stroke="#0d0d0d" stroke-width="0.25" textLength="99.69" lengthAdjust="spacingAndGlyphs"><tspan>("</tspan><tspan font-weight="bold" stroke-width="0.05">Company</tspan><tspan>").</tspan></text>
<text x="384.35" y="550.1" font-size="15.0" fill="#0d0d0d" stroke="#0d0d0d" stroke-width="0.25" textLength="33.02" lengthAdjust="spacingAndGlyphs"><tspan>Both</tspan></text>
<text x="422.41" y="550.1" font-size="15.0" fill="#0d0d0d" stroke="#0d0d0d" stroke-width="0.25" textLength="48.18" lengthAdjust="spacingAndGlyphs"><tspan>parties</tspan></text>
<text x="475.63" y="550.1" font-size="15.0" fill="#0d0d0d" stroke="#0d0d0d" stroke-width="0.25" textLength="41.06" lengthAdjust="spacingAndGlyphs"><tspan>agree</tspan></text>
<text x="521.73" y="550.1" font-size="15.0" fill="#0d0d0d" stroke="#0d0d0d" stroke-width="0.25" textLength="26.78" lengthAdjust="spacingAndGlyphs"><tspan>that</tspan></text>
<text x="553.55" y="550.1" font-size="15.0" fill="#0d0d0d" stroke="#0d0d0d" stroke-width="0.25" textLength="25.88" lengthAdjust="spacingAndGlyphs"><tspan>any</tspan></text>
<text x="584.47" y="550.1" font-size="15.0" fill="#0d0d0d" stroke="#0d0d0d" stroke-width="0.25" textLength="66.93" lengthAdjust="spacingAndGlyphs"><tspan>disclosed</tspan></text>
<text x="656.44" y="550.1" font-size="15.0" fill="#0d0d0d" stroke="#0d0d0d" stroke-width="0.25" textLength="84.76" lengthAdjust="spacingAndGlyphs"><tspan>Confidential</tspan></text>
<text x="746.24" y="550.1" font-size="15.0" fill="#0d0d0d" stroke="#0d0d0d" stroke-width="0.25" textLength="84.76" lengthAdjust="spacingAndGlyphs"><tspan>Information,</tspan></text>
<text x="836.05" y="550.1" font-size="15.0" fill="#0d0d0d" stroke="#0d0d0d" stroke-width="0.25" textLength="16.95" lengthAdjust="spacingAndGlyphs"><tspan>as</tspan></text>
<text x="125.00" y="571.5" font-size="15.0" fill="#0d0d0d" stroke="#0d0d0d" stroke-width="0.25" textLength="52.66" lengthAdjust="spacingAndGlyphs"><tspan>defined</tspan></text>
<text x="182.51" y="571.5" font-size="15.0" fill="#0d0d0d" stroke="#0d0d0d" stroke-width="0.25" textLength="45.53" lengthAdjust="spacingAndGlyphs"><tspan>below,</tspan></text>
<text x="232.88" y="571.5" font-size="15.0" fill="#0d0d0d" stroke="#0d0d0d" stroke-width="0.25" textLength="61.58" lengthAdjust="spacingAndGlyphs"><tspan>provided</tspan></text>
<text x="299.30" y="571.5" font-size="15.0" fill="#0d0d0d" stroke="#0d0d0d" stroke-width="0.25" textLength="16.95" lengthAdjust="spacingAndGlyphs"><tspan>by</tspan></text>
<text x="321.09" y="571.5" font-size="15.0" fill="#0d0d0d" stroke="#0d0d0d" stroke-width="0.25" textLength="22.32" lengthAdjust="spacingAndGlyphs"><tspan>the</tspan></text>
<text x="348.25" y="571.5" font-size="15.0" fill="#0d0d0d" stroke="#0d0d0d" stroke-width="0.25" textLength="70.49" lengthAdjust="spacingAndGlyphs"><tspan>disclosing</tspan></text>
<text x="423.58" y="571.5" font-size="15.0" fill="#0d0d0d" stroke="#0d0d0d" stroke-width="0.25" textLength="40.74" lengthAdjust="spacingAndGlyphs"><tspan>Party,</tspan></text>
<text x="469.17" y="571.5" font-size="15.0" fill="#0d0d0d" stroke="#0d0d0d" stroke-width="0.25" textLength="22.30" lengthAdjust="spacingAndGlyphs"><tspan>(as</tspan></text>
<text x="496.32" y="571.5" font-size="15.0" fill="#0d0d0d" stroke="#0d0d0d" stroke-width="0.25" textLength="71.17" lengthAdjust="spacingAndGlyphs"><tspan>"</tspan><tspan font-weight="bold" stroke-width="0.05">Owner</tspan><tspan>"),</tspan></text>
<text x="572.33" y="571.5" font-size="15.0" fill="#0d0d0d" stroke="#0d0d0d" stroke-width="0.25" textLength="13.39" lengthAdjust="spacingAndGlyphs"><tspan>to</tspan></text>
<text x="590.57" y="571.5" font-size="15.0" fill="#0d0d0d" stroke="#0d0d0d" stroke-width="0.25" textLength="22.32" lengthAdjust="spacingAndGlyphs"><tspan>the</tspan></text>
<text x="617.73" y="571.5" font-size="15.0" fill="#0d0d0d" stroke="#0d0d0d" stroke-width="0.25" textLength="64.23" lengthAdjust="spacingAndGlyphs"><tspan>receiving</tspan></text>
<text x="686.81" y="571.5" font-size="15.0" fill="#0d0d0d" stroke="#0d0d0d" stroke-width="0.25" textLength="40.74" lengthAdjust="spacingAndGlyphs"><tspan>Party,</tspan></text>
<text x="732.40" y="571.5" font-size="15.0" fill="#0d0d0d" stroke="#0d0d0d" stroke-width="0.25" textLength="22.30" lengthAdjust="spacingAndGlyphs"><tspan>(as</tspan></text>
<text x="759.54" y="571.5" font-size="15.0" fill="#0d0d0d" stroke="#0d0d0d" stroke-width="0.25" textLength="93.46" lengthAdjust="spacingAndGlyphs"><tspan>"</tspan><tspan font-weight="bold" stroke-width="0.05">Recipient</tspan><tspan>"),</tspan></text>
<text x="125.00" y="592.9" font-size="15.0" fill="#0d0d0d" stroke="#0d0d0d" stroke-width="0.25" textLength="18.74" lengthAdjust="spacingAndGlyphs"><tspan>for</tspan></text>
<text x="148.50" y="592.9" font-size="15.0" fill="#0d0d0d" stroke="#0d0d0d" stroke-width="0.25" textLength="22.32" lengthAdjust="spacingAndGlyphs"><tspan>the</tspan></text>
<text x="175.58" y="592.9" font-size="15.0" fill="#0d0d0d" stroke="#0d0d0d" stroke-width="0.25" textLength="46.39" lengthAdjust="spacingAndGlyphs"><tspan>limited</tspan></text>
<text x="226.73" y="592.9" font-size="15.0" fill="#0d0d0d" stroke="#0d0d0d" stroke-width="0.25" textLength="58.01" lengthAdjust="spacingAndGlyphs"><tspan>purpose</tspan></text>
<text x="289.51" y="592.9" font-size="15.0" fill="#0d0d0d" stroke="#0d0d0d" stroke-width="0.25" textLength="43.74" lengthAdjust="spacingAndGlyphs"><tspan>stated</tspan></text>
<text x="338.00" y="592.9" font-size="15.0" fill="#0d0d0d" stroke="#0d0d0d" stroke-width="0.25" textLength="44.62" lengthAdjust="spacingAndGlyphs"><tspan>herein</tspan></text>
<text x="387.38" y="592.9" font-size="15.0" fill="#0d0d0d" stroke="#0d0d0d" stroke-width="0.25" textLength="27.67" lengthAdjust="spacingAndGlyphs"><tspan>(the</tspan></text>
<text x="419.81" y="592.9" font-size="15.0" fill="#0d0d0d" stroke="#0d0d0d" stroke-width="0.25" textLength="85.43" lengthAdjust="spacingAndGlyphs"><tspan>"</tspan><tspan font-weight="bold" stroke-width="0.05">Purpose</tspan><tspan>"),</tspan></text>
<text x="510.00" y="592.9" font-size="15.0" fill="#0d0d0d" stroke="#0d0d0d" stroke-width="0.25" textLength="33.02" lengthAdjust="spacingAndGlyphs"><tspan>shall</tspan></text>
<text x="547.78" y="592.9" font-size="15.0" fill="#0d0d0d" stroke="#0d0d0d" stroke-width="0.25" textLength="17.86" lengthAdjust="spacingAndGlyphs"><tspan>be</tspan></text>
<text x="570.40" y="592.9" font-size="15.0" fill="#0d0d0d" stroke="#0d0d0d" stroke-width="0.25" textLength="49.97" lengthAdjust="spacingAndGlyphs"><tspan>treated</tspan></text>
<text x="625.13" y="592.9" font-size="15.0" fill="#0d0d0d" stroke="#0d0d0d" stroke-width="0.25" textLength="12.51" lengthAdjust="spacingAndGlyphs"><tspan>in</tspan></text>
<text x="642.39" y="592.9" font-size="15.0" fill="#0d0d0d" stroke="#0d0d0d" stroke-width="0.25" textLength="82.99" lengthAdjust="spacingAndGlyphs"><tspan>accordance</tspan></text>
<text x="730.15" y="592.9" font-size="15.0" fill="#0d0d0d" stroke="#0d0d0d" stroke-width="0.25" textLength="28.56" lengthAdjust="spacingAndGlyphs"><tspan>with</tspan></text>
<text x="763.46" y="592.9" font-size="15.0" fill="#0d0d0d" stroke="#0d0d0d" stroke-width="0.25" textLength="22.32" lengthAdjust="spacingAndGlyphs"><tspan>the</tspan></text>
<text x="790.54" y="592.9" font-size="15.0" fill="#0d0d0d" stroke="#0d0d0d" stroke-width="0.25" textLength="62.46" lengthAdjust="spacingAndGlyphs"><tspan>following</tspan></text>
<text x="125.00" y="614.3" font-size="15.0" fill="#0d0d0d" stroke="#0d0d0d" stroke-width="0.25" textLength="76.00" lengthAdjust="spacingAndGlyphs"><tspan>provisions:</tspan></text>
<text x="125.00" y="652.5" font-size="15.0" fill="#0d0d0d" stroke="#0d0d0d" stroke-width="0.25" textLength="13.39" lengthAdjust="spacingAndGlyphs"><tspan font-weight="bold" stroke-width="0.05">1.</tspan></text>
<text x="145.30" y="652.5" font-size="15.0" fill="#0d0d0d" stroke="#0d0d0d" stroke-width="0.25" textLength="100.35" lengthAdjust="spacingAndGlyphs"><tspan font-weight="bold" stroke-width="0.05">"Confidential</tspan></text>
<text x="252.55" y="652.5" font-size="15.0" fill="#0d0d0d" stroke="#0d0d0d" stroke-width="0.25" textLength="101.23" lengthAdjust="spacingAndGlyphs"><tspan font-weight="bold" stroke-width="0.05">Information":</tspan></text>
<text x="360.69" y="652.5" font-size="15.0" fill="#0d0d0d" stroke="#0d0d0d" stroke-width="0.25" textLength="33.02" lengthAdjust="spacingAndGlyphs"><tspan>shall</tspan></text>
<text x="400.61" y="652.5" font-size="15.0" fill="#0d0d0d" stroke="#0d0d0d" stroke-width="0.25" textLength="40.16" lengthAdjust="spacingAndGlyphs"><tspan>mean</tspan></text>
<text x="447.68" y="652.5" font-size="15.0" fill="#0d0d0d" stroke="#0d0d0d" stroke-width="0.25" textLength="25.88" lengthAdjust="spacingAndGlyphs"><tspan>any</tspan></text>
<text x="480.47" y="652.5" font-size="15.0" fill="#0d0d0d" stroke="#0d0d0d" stroke-width="0.25" textLength="79.40" lengthAdjust="spacingAndGlyphs"><tspan>information</tspan></text>
<text x="566.77" y="652.5" font-size="15.0" fill="#0d0d0d" stroke="#0d0d0d" stroke-width="0.25" textLength="61.59" lengthAdjust="spacingAndGlyphs"><tspan>obtained</tspan></text>
<text x="635.27" y="652.5" font-size="15.0" fill="#0d0d0d" stroke="#0d0d0d" stroke-width="0.25" textLength="18.74" lengthAdjust="spacingAndGlyphs"><tspan>for</tspan></text>
<text x="660.91" y="652.5" font-size="15.0" fill="#0d0d0d" stroke="#0d0d0d" stroke-width="0.25" textLength="22.32" lengthAdjust="spacingAndGlyphs"><tspan>the</tspan></text>
<text x="690.14" y="652.5" font-size="15.0" fill="#0d0d0d" stroke="#0d0d0d" stroke-width="0.25" textLength="59.79" lengthAdjust="spacingAndGlyphs"><tspan>Purpose</tspan></text>
<text x="756.83" y="652.5" font-size="15.0" fill="#0d0d0d" stroke="#0d0d0d" stroke-width="0.25" textLength="43.74" lengthAdjust="spacingAndGlyphs"><tspan>stated</tspan></text>
<text x="807.47" y="652.5" font-size="15.0" fill="#0d0d0d" stroke="#0d0d0d" stroke-width="0.25" textLength="45.53" lengthAdjust="spacingAndGlyphs"><tspan>below,</tspan></text>
<text x="125.00" y="673.9" font-size="15.0" fill="#0d0d0d" stroke="#0d0d0d" stroke-width="0.25" textLength="57.38" lengthAdjust="spacingAndGlyphs"><tspan>whether</tspan></text>
<text x="186.87" y="673.9" font-size="15.0" fill="#0d0d0d" stroke="#0d0d0d" stroke-width="0.25" textLength="67.24" lengthAdjust="spacingAndGlyphs"><tspan>disclosed</tspan></text>
<text x="258.60" y="673.9" font-size="15.0" fill="#0d0d0d" stroke="#0d0d0d" stroke-width="0.25" textLength="38.55" lengthAdjust="spacingAndGlyphs"><tspan>orally</tspan></text>
<text x="301.64" y="673.9" font-size="15.0" fill="#0d0d0d" stroke="#0d0d0d" stroke-width="0.25" textLength="14.35" lengthAdjust="spacingAndGlyphs"><tspan>or</tspan></text>
<text x="320.47" y="673.9" font-size="15.0" fill="#0d0d0d" stroke="#0d0d0d" stroke-width="0.25" textLength="12.57" lengthAdjust="spacingAndGlyphs"><tspan>in</tspan></text>
<text x="337.52" y="673.9" font-size="15.0" fill="#0d0d0d" stroke="#0d0d0d" stroke-width="0.25" textLength="51.08" lengthAdjust="spacingAndGlyphs"><tspan>writing,</tspan></text>
<text x="393.09" y="673.9" font-size="15.0" fill="#0d0d0d" stroke="#0d0d0d" stroke-width="0.25" textLength="14.35" lengthAdjust="spacingAndGlyphs"><tspan>or</tspan></text>
<text x="411.92" y="673.9" font-size="15.0" fill="#0d0d0d" stroke="#0d0d0d" stroke-width="0.25" textLength="54.70" lengthAdjust="spacingAndGlyphs"><tspan>through</tspan></text>
<text x="471.10" y="673.9" font-size="15.0" fill="#0d0d0d" stroke="#0d0d0d" stroke-width="0.25" textLength="87.86" lengthAdjust="spacingAndGlyphs"><tspan>observation,</tspan></text>
<text x="563.44" y="673.9" font-size="15.0" fill="#0d0d0d" stroke="#0d0d0d" stroke-width="0.25" textLength="91.45" lengthAdjust="spacingAndGlyphs"><tspan>examination,</tspan></text>
<text x="659.38" y="673.9" font-size="15.0" fill="#0d0d0d" stroke="#0d0d0d" stroke-width="0.25" textLength="30.49" lengthAdjust="spacingAndGlyphs"><tspan>use,</tspan></text>
<text x="694.36" y="673.9" font-size="15.0" fill="#0d0d0d" stroke="#0d0d0d" stroke-width="0.25" textLength="14.35" lengthAdjust="spacingAndGlyphs"><tspan>or</tspan></text>
<text x="713.19" y="673.9" font-size="15.0" fill="#0d0d0d" stroke="#0d0d0d" stroke-width="0.25" textLength="78.01" lengthAdjust="spacingAndGlyphs"><tspan>evaluation.</tspan></text>
<text x="125.00" y="711.4" font-size="15.0" fill="#0d0d0d" stroke="#0d0d0d" stroke-width="0.25" textLength="13.39" lengthAdjust="spacingAndGlyphs"><tspan font-weight="bold" stroke-width="0.05">2.</tspan></text>
<text x="142.21" y="711.4" font-size="15.0" fill="#0d0d0d" stroke="#0d0d0d" stroke-width="0.25" textLength="64.22" lengthAdjust="spacingAndGlyphs"><tspan font-weight="bold" stroke-width="0.05">Purpose</tspan></text>
<text x="210.24" y="711.4" font-size="15.0" fill="#0d0d0d" stroke="#0d0d0d" stroke-width="0.25" textLength="15.16" lengthAdjust="spacingAndGlyphs"><tspan font-weight="bold" stroke-width="0.05">of</tspan></text>
<text x="229.21" y="711.4" font-size="15.0" fill="#0d0d0d" stroke="#0d0d0d" stroke-width="0.25" textLength="92.74" lengthAdjust="spacingAndGlyphs"><tspan font-weight="bold" stroke-width="0.05">Confidential</tspan></text>
<text x="325.76" y="711.4" font-size="15.0" fill="#0d0d0d" stroke="#0d0d0d" stroke-width="0.25" textLength="92.74" lengthAdjust="spacingAndGlyphs"><tspan font-weight="bold" stroke-width="0.05">Information.</tspan></text>
<text x="422.32" y="711.4" font-size="15.0" fill="#0d0d0d" stroke="#0d0d0d" stroke-width="0.25" textLength="90.13" lengthAdjust="spacingAndGlyphs"><tspan font-weight="bold" stroke-width="0.05">("Purpose")</tspan></text>
<text x="516.26" y="711.4" font-size="15.0" fill="#0d0d0d" stroke="#0d0d0d" stroke-width="0.25" textLength="27.67" lengthAdjust="spacingAndGlyphs"><tspan>The</tspan></text>
<text x="547.74" y="711.4" font-size="15.0" fill="#0d0d0d" stroke="#0d0d0d" stroke-width="0.25" textLength="84.76" lengthAdjust="spacingAndGlyphs"><tspan>Confidential</tspan></text>
<text x="636.32" y="711.4" font-size="15.0" fill="#0d0d0d" stroke="#0d0d0d" stroke-width="0.25" textLength="80.30" lengthAdjust="spacingAndGlyphs"><tspan>Information</tspan></text>
<text x="720.43" y="711.4" font-size="15.0" fill="#0d0d0d" stroke="#0d0d0d" stroke-width="0.25" textLength="69.60" lengthAdjust="spacingAndGlyphs"><tspan>described</tspan></text>
<text x="793.85" y="711.4" font-size="15.0" fill="#0d0d0d" stroke="#0d0d0d" stroke-width="0.25" textLength="43.74" lengthAdjust="spacingAndGlyphs"><tspan>above</tspan></text>
<text x="841.40" y="711.4" font-size="15.0" fill="#0d0d0d" stroke="#0d0d0d" stroke-width="0.25" textLength="11.60" lengthAdjust="spacingAndGlyphs"><tspan>is</tspan></text>
<text x="125.00" y="732.8" font-size="15.0" fill="#0d0d0d" stroke="#0d0d0d" stroke-width="0.25" textLength="39.27" lengthAdjust="spacingAndGlyphs"><tspan>being</tspan></text>
<text x="167.26" y="732.8" font-size="15.0" fill="#0d0d0d" stroke="#0d0d0d" stroke-width="0.25" textLength="66.93" lengthAdjust="spacingAndGlyphs"><tspan>disclosed</tspan></text>
<text x="237.17" y="732.8" font-size="15.0" fill="#0d0d0d" stroke="#0d0d0d" stroke-width="0.25" textLength="13.39" lengthAdjust="spacingAndGlyphs"><tspan>to</tspan></text>
<text x="253.55" y="732.8" font-size="15.0" fill="#0d0d0d" stroke="#0d0d0d" stroke-width="0.25" textLength="22.32" lengthAdjust="spacingAndGlyphs"><tspan>the</tspan></text>
<text x="278.85" y="732.8" font-size="15.0" fill="#0d0d0d" stroke="#0d0d0d" stroke-width="0.25" textLength="66.93" lengthAdjust="spacingAndGlyphs"><tspan>Recipient</tspan></text>
<text x="348.76" y="732.8" font-size="15.0" fill="#0d0d0d" stroke="#0d0d0d" stroke-width="0.25" textLength="18.74" lengthAdjust="spacingAndGlyphs"><tspan>for</tspan></text>
<text x="370.49" y="732.8" font-size="15.0" fill="#0d0d0d" stroke="#0d0d0d" stroke-width="0.25" textLength="22.32" lengthAdjust="spacingAndGlyphs"><tspan>the</tspan></text>
<text x="395.80" y="732.8" font-size="15.0" fill="#0d0d0d" stroke="#0d0d0d" stroke-width="0.25" textLength="78.01" lengthAdjust="spacingAndGlyphs"><tspan>Recipient's</tspan></text>
<text x="476.79" y="732.8" font-size="15.0" fill="#0d0d0d" stroke="#0d0d0d" stroke-width="0.25" textLength="25.88" lengthAdjust="spacingAndGlyphs"><tspan>use</tspan></text>
<text x="505.66" y="732.8" font-size="15.0" fill="#0d0d0d" stroke="#0d0d0d" stroke-width="0.25" textLength="41.04" lengthAdjust="spacingAndGlyphs"><tspan>solely</tspan></text>
<text x="549.69" y="732.8" font-size="15.0" fill="#0d0d0d" stroke="#0d0d0d" stroke-width="0.25" textLength="129.27" lengthAdjust="spacingAndGlyphs"><tspan fill="#f5521a" stroke="#f5521a">[</tspan><tspan dy="-5.2" font-size="10.2" fill="#970f0f" stroke="#970f0f" stroke-width="0.1">'Business Relationship'</tspan><tspan dy="5.2">to</tspan></text>
<text x="681.95" y="732.8" font-size="15.0" fill="#0d0d0d" stroke="#0d0d0d" stroke-width="0.25" textLength="76.74" lengthAdjust="spacingAndGlyphs"><tspan>investigate</tspan></text>
<text x="761.67" y="732.8" font-size="15.0" fill="#0d0d0d" stroke="#0d0d0d" stroke-width="0.25" textLength="22.32" lengthAdjust="spacingAndGlyphs"><tspan>the</tspan></text>
<text x="786.98" y="732.8" font-size="15.0" fill="#0d0d0d" stroke="#0d0d0d" stroke-width="0.25" textLength="66.02" lengthAdjust="spacingAndGlyphs"><tspan>feasibility</tspan></text>
<text x="125.00" y="754.2" font-size="15.0" fill="#0d0d0d" stroke="#0d0d0d" stroke-width="0.25" textLength="13.39" lengthAdjust="spacingAndGlyphs"><tspan>of</tspan></text>
<text x="144.90" y="754.2" font-size="15.0" fill="#0d0d0d" stroke="#0d0d0d" stroke-width="0.25" textLength="8.93" lengthAdjust="spacingAndGlyphs"><tspan>a</tspan></text>
<text x="160.34" y="754.2" font-size="15.0" fill="#0d0d0d" stroke="#0d0d0d" stroke-width="0.25" textLength="41.04" lengthAdjust="spacingAndGlyphs"><tspan>future</tspan></text>
<text x="207.90" y="754.2" font-size="15.0" fill="#0d0d0d" stroke="#0d0d0d" stroke-width="0.25" textLength="63.35" lengthAdjust="spacingAndGlyphs"><tspan>business</tspan></text>
<text x="277.76" y="754.2" font-size="15.0" fill="#0d0d0d" stroke="#0d0d0d" stroke-width="0.25" textLength="82.09" lengthAdjust="spacingAndGlyphs"><tspan>relationship</tspan></text>
<text x="366.36" y="754.2" font-size="15.0" fill="#0d0d0d" stroke="#0d0d0d" stroke-width="0.25" textLength="60.69" lengthAdjust="spacingAndGlyphs"><tspan>between</tspan></text>
<text x="433.56" y="754.2" font-size="15.0" fill="#0d0d0d" stroke="#0d0d0d" stroke-width="0.25" textLength="22.32" lengthAdjust="spacingAndGlyphs"><tspan>the</tspan></text>
<text x="462.39" y="754.2" font-size="15.0" fill="#0d0d0d" stroke="#0d0d0d" stroke-width="0.25" textLength="48.18" lengthAdjust="spacingAndGlyphs"><tspan>parties</tspan></text>
<text x="517.09" y="754.2" font-size="15.0" fill="#0d0d0d" stroke="#0d0d0d" stroke-width="0.25" textLength="49.09" lengthAdjust="spacingAndGlyphs"><tspan>related</tspan></text>
<text x="572.69" y="754.2" font-size="15.0" fill="#0d0d0d" stroke="#0d0d0d" stroke-width="0.25" textLength="13.39" lengthAdjust="spacingAndGlyphs"><tspan>to</tspan></text>
<text x="592.59" y="754.2" font-size="15.0" fill="#0d0d0d" stroke="#0d0d0d" stroke-width="0.25" textLength="22.32" lengthAdjust="spacingAndGlyphs"><tspan>the</tspan></text>
<text x="621.42" y="754.2" font-size="15.0" fill="#0d0d0d" stroke="#0d0d0d" stroke-width="0.25" textLength="29.46" lengthAdjust="spacingAndGlyphs"><tspan>sale</tspan></text>
<text x="657.39" y="754.2" font-size="15.0" fill="#0d0d0d" stroke="#0d0d0d" stroke-width="0.25" textLength="14.28" lengthAdjust="spacingAndGlyphs"><tspan>or</tspan></text>
<text x="678.18" y="754.2" font-size="15.0" fill="#0d0d0d" stroke="#0d0d0d" stroke-width="0.25" textLength="66.04" lengthAdjust="spacingAndGlyphs"><tspan>purchase</tspan></text>
<text x="750.73" y="754.2" font-size="15.0" fill="#0d0d0d" stroke="#0d0d0d" stroke-width="0.25" textLength="13.39" lengthAdjust="spacingAndGlyphs"><tspan>of</tspan></text>
<text x="770.64" y="754.2" font-size="15.0" fill="#0d0d0d" stroke="#0d0d0d" stroke-width="0.25" textLength="61.58" lengthAdjust="spacingAndGlyphs"><tspan>products</tspan></text>
<text x="838.72" y="754.2" font-size="15.0" fill="#0d0d0d" stroke="#0d0d0d" stroke-width="0.25" textLength="14.28" lengthAdjust="spacingAndGlyphs"><tspan>or</tspan></text>
<text x="125.00" y="775.6" font-size="15.0" fill="#0d0d0d" stroke="#0d0d0d" stroke-width="0.25" textLength="63.33" lengthAdjust="spacingAndGlyphs"><tspan>services.</tspan></text>
<text x="194.56" y="775.6" font-size="15.0" fill="#0d0d0d" stroke="#0d0d0d" stroke-width="0.25" textLength="66.93" lengthAdjust="spacingAndGlyphs"><tspan>Recipient</tspan></text>
<text x="267.72" y="775.6" font-size="15.0" fill="#0d0d0d" stroke="#0d0d0d" stroke-width="0.25" textLength="30.33" lengthAdjust="spacingAndGlyphs"><tspan>may</tspan></text>
<text x="304.28" y="775.6" font-size="15.0" fill="#0d0d0d" stroke="#0d0d0d" stroke-width="0.25" textLength="22.32" lengthAdjust="spacingAndGlyphs"><tspan>not</tspan></text>
<text x="332.84" y="775.6" font-size="15.0" fill="#0d0d0d" stroke="#0d0d0d" stroke-width="0.25" textLength="25.88" lengthAdjust="spacingAndGlyphs"><tspan>use</tspan></text>
<text x="364.95" y="775.6" font-size="15.0" fill="#0d0d0d" stroke="#0d0d0d" stroke-width="0.25" textLength="22.32" lengthAdjust="spacingAndGlyphs"><tspan>the</tspan></text>
<text x="393.50" y="775.6" font-size="15.0" fill="#0d0d0d" stroke="#0d0d0d" stroke-width="0.25" textLength="84.76" lengthAdjust="spacingAndGlyphs"><tspan>Confidential</tspan></text>
<text x="484.50" y="775.6" font-size="15.0" fill="#0d0d0d" stroke="#0d0d0d" stroke-width="0.25" textLength="80.30" lengthAdjust="spacingAndGlyphs"><tspan>Information</tspan></text>
<text x="571.04" y="775.6" font-size="15.0" fill="#0d0d0d" stroke="#0d0d0d" stroke-width="0.25" textLength="18.74" lengthAdjust="spacingAndGlyphs"><tspan>for</tspan></text>
<text x="596.01" y="775.6" font-size="15.0" fill="#0d0d0d" stroke="#0d0d0d" stroke-width="0.25" textLength="25.88" lengthAdjust="spacingAndGlyphs"><tspan>any</tspan></text>
<text x="628.13" y="775.6" font-size="15.0" fill="#0d0d0d" stroke="#0d0d0d" stroke-width="0.25" textLength="58.01" lengthAdjust="spacingAndGlyphs"><tspan>purpose</tspan></text>
<text x="692.37" y="775.6" font-size="15.0" fill="#0d0d0d" stroke="#0d0d0d" stroke-width="0.25" textLength="36.60" lengthAdjust="spacingAndGlyphs"><tspan>other</tspan></text>
<text x="735.20" y="775.6" font-size="15.0" fill="#0d0d0d" stroke="#0d0d0d" stroke-width="0.25" textLength="31.25" lengthAdjust="spacingAndGlyphs"><tspan>than</tspan></text>
<text x="772.69" y="775.6" font-size="15.0" fill="#0d0d0d" stroke="#0d0d0d" stroke-width="0.25" textLength="13.39" lengthAdjust="spacingAndGlyphs"><tspan>to</tspan></text>
<text x="792.31" y="775.6" font-size="15.0" fill="#0d0d0d" stroke="#0d0d0d" stroke-width="0.25" textLength="60.69" lengthAdjust="spacingAndGlyphs"><tspan>evaluate</tspan></text>
<text x="125.00" y="797.0" font-size="15.0" fill="#0d0d0d" stroke="#0d0d0d" stroke-width="0.25" textLength="57.11" lengthAdjust="spacingAndGlyphs"><tspan>whether</tspan></text>
<text x="187.35" y="797.0" font-size="15.0" fill="#0d0d0d" stroke="#0d0d0d" stroke-width="0.25" textLength="13.39" lengthAdjust="spacingAndGlyphs"><tspan>to</tspan></text>
<text x="205.97" y="797.0" font-size="15.0" fill="#0d0d0d" stroke="#0d0d0d" stroke-width="0.25" textLength="53.57" lengthAdjust="spacingAndGlyphs"><tspan>engage</tspan></text>
<text x="264.77" y="797.0" font-size="15.0" fill="#0d0d0d" stroke="#0d0d0d" stroke-width="0.25" textLength="12.51" lengthAdjust="spacingAndGlyphs"><tspan>in</tspan></text>
<text x="282.51" y="797.0" font-size="15.0" fill="#0d0d0d" stroke="#0d0d0d" stroke-width="0.25" textLength="33.91" lengthAdjust="spacingAndGlyphs"><tspan>such</tspan></text>
<text x="321.66" y="797.0" font-size="15.0" fill="#0d0d0d" stroke="#0d0d0d" stroke-width="0.25" textLength="8.93" lengthAdjust="spacingAndGlyphs"><tspan>a</tspan></text>
<text x="335.82" y="797.0" font-size="15.0" fill="#0d0d0d" stroke="#0d0d0d" stroke-width="0.25" textLength="63.35" lengthAdjust="spacingAndGlyphs"><tspan>business</tspan></text>
<text x="404.40" y="797.0" font-size="15.0" fill="#0d0d0d" stroke="#0d0d0d" stroke-width="0.25" textLength="82.09" lengthAdjust="spacingAndGlyphs"><tspan>relationship</tspan></text>
<text x="491.72" y="797.0" font-size="15.0" fill="#0d0d0d" stroke="#0d0d0d" stroke-width="0.25" textLength="28.56" lengthAdjust="spacingAndGlyphs"><tspan>with</tspan></text>
<text x="525.51" y="797.0" font-size="15.0" fill="#0d0d0d" stroke="#0d0d0d" stroke-width="0.25" textLength="50.86" lengthAdjust="spacingAndGlyphs"><tspan>Owner.</tspan></text>
<text x="581.61" y="797.0" font-size="15.0" fill="#0d0d0d" stroke="#0d0d0d" stroke-width="0.25" textLength="13.39" lengthAdjust="spacingAndGlyphs"><tspan>In</tspan></text>
<text x="600.23" y="797.0" font-size="15.0" fill="#0d0d0d" stroke="#0d0d0d" stroke-width="0.25" textLength="22.32" lengthAdjust="spacingAndGlyphs"><tspan>the</tspan></text>
<text x="627.79" y="797.0" font-size="15.0" fill="#0d0d0d" stroke="#0d0d0d" stroke-width="0.25" textLength="39.27" lengthAdjust="spacingAndGlyphs"><tspan>event</tspan></text>
<text x="672.30" y="797.0" font-size="15.0" fill="#0d0d0d" stroke="#0d0d0d" stroke-width="0.25" textLength="26.78" lengthAdjust="spacingAndGlyphs"><tspan>that</tspan></text>
<text x="704.31" y="797.0" font-size="15.0" fill="#0d0d0d" stroke="#0d0d0d" stroke-width="0.25" textLength="22.32" lengthAdjust="spacingAndGlyphs"><tspan>the</tspan></text>
<text x="731.87" y="797.0" font-size="15.0" fill="#0d0d0d" stroke="#0d0d0d" stroke-width="0.25" textLength="48.18" lengthAdjust="spacingAndGlyphs"><tspan>parties</tspan></text>
<text x="785.29" y="797.0" font-size="15.0" fill="#0d0d0d" stroke="#0d0d0d" stroke-width="0.25" textLength="36.60" lengthAdjust="spacingAndGlyphs"><tspan>enter</tspan></text>
<text x="827.12" y="797.0" font-size="15.0" fill="#0d0d0d" stroke="#0d0d0d" stroke-width="0.25" textLength="25.88" lengthAdjust="spacingAndGlyphs"><tspan>into</tspan></text>
<path d="M130.2,279.1 H127.2 V293.7 H130.2" fill="none" stroke="#f5521a" stroke-width="2.4"/>
<text x="132" y="285.3" font-size="11" fill="#970f0f" font-weight="bold" textLength="28.00" lengthAdjust="spacingAndGlyphs">UniIn</text>
<text x="163.8" y="292.3" font-size="18.2" fill="#1f497f" font-weight="bold" textLength="554.60" lengthAdjust="spacingAndGlyphs" stroke="#1f497f" stroke-width="0.3">CORBODA UNILATERAL INCOMING NON DISCLOSURE AGREEMENT</text>
<path d="M719.4,279.1 H722.4 V293.7 H719.4" fill="none" stroke="#f5521a" stroke-width="2.4"/>
<path d="M130.2,331.6 H127.2 V346.2 H130.2" fill="none" stroke="#f5521a" stroke-width="2.4"/>
<text x="132" y="337.8" font-size="11" fill="#970f0f" font-weight="bold" textLength="38.00" lengthAdjust="spacingAndGlyphs">UniOut</text>
<text x="173.6" y="344.8" font-size="18.2" fill="#1f497f" font-weight="bold" textLength="556.80" lengthAdjust="spacingAndGlyphs" stroke="#1f497f" stroke-width="0.3">CORBODA UNILATERAL OUTGOING NON DISCLOSURE AGREEMENT</text>
<path d="M731.4,331.6 H734.4 V346.2 H731.4" fill="none" stroke="#f5521a" stroke-width="2.4"/>
<path d="M130.2,385.0 H127.2 V399.59999999999997 H130.2" fill="none" stroke="#f5521a" stroke-width="2.4"/>
<text x="132" y="391.2" font-size="11" fill="#970f0f" font-weight="bold" textLength="39.00" lengthAdjust="spacingAndGlyphs">Mutual</text>
<text x="174.4" y="398.2" font-size="18.2" fill="#1f497f" font-weight="bold" textLength="427.90" lengthAdjust="spacingAndGlyphs" stroke="#1f497f" stroke-width="0.3">CORBODA MUTUAL NON DISCLOSURE AGREEMENT</text>
<path d="M603.3,385.0 H606.3 V399.59999999999997 H603.3" fill="none" stroke="#f5521a" stroke-width="2.4"/>
<rect x="764.5" y="228.2" width="9.4" height="9.9" fill="#8fdcf5"/>
<g fill="none" stroke="#787878" stroke-width="1.75" stroke-linejoin="round"><path d="M787.1,231.6 V231.3 Q787.1,229.1 784.9,229.1 H779.6 Q777.3,229.1 777.3,231.4 V238.6 Q777.3,240.9 779.6,240.9 H784.9 Q787.1,240.9 787.1,238.7 V238.4"/><rect x="791.6" y="232.8" width="7.7" height="8.1" rx="2"/><path d="M804,241.8 V235 Q804,232.8 806.2,232.8 H810.8"/><path d="M814.3,228 V240.9 H820 Q822,240.9 822,238.9 V234.8 Q822,232.8 820,232.8 H814.3"/><rect x="826.7" y="232.8" width="7.5" height="8.1" rx="2"/><path d="M846.1,228 V240.9 H840.4 Q838.4,240.9 838.4,238.9 V234.8 Q838.4,232.8 840.4,232.8 H846.1"/><path d="M850.6,232.8 H856.8 Q858.6,232.8 858.6,234.6 V240.9 H852.6 Q850.9,240.9 850.9,239.2 V238 Q850.9,236.4 852.6,236.4 H858.6"/></g>
<rect x="0" y="797" width="947" height="17" fill="#e6e6e6"/>
<line x1="947.5" y1="128" x2="947.5" y2="814" stroke="#c6c6c6" stroke-width="1"/>
<text x="963" y="160" font-size="22.3" fill="#2c5aa5" textLength="152.50" lengthAdjust="spacingAndGlyphs">Dictionary Editor</text>
<path d="M1187.5,146.5 L1197.5,146.5 L1192.5,152 Z" fill="#666"/>
<path d="M1229.6,144.2 L1238.6,153.2 M1238.6,144.2 L1229.6,153.2" stroke="#5a5a5a" stroke-width="1.9"/>
<rect x="955" y="167" width="294" height="640" fill="#ffffff"/>
<rect x="957.5" y="169.5" width="289" height="28.5" fill="#f9f9f9" stroke="#d2d2d2" stroke-width="1"/>
<rect x="957.5" y="198" width="289" height="28.5" fill="#f9f9f9" stroke="#d2d2d2" stroke-width="1"/>
<rect x="957.5" y="226.5" width="289" height="548" fill="#ffffff" stroke="#d2d2d2" stroke-width="1"/>
<rect x="957.5" y="779.5" width="289" height="25.5" fill="#f7f7f7" stroke="#d2d2d2" stroke-width="1"/>
<circle cx="973.3" cy="183.3" r="7.9" fill="#a8a8a8"/>
<path d="M975,179.5 L971.5,183.3 L975,187" fill="none" stroke="#fff" stroke-width="1.5"/>
<path d="M990.8,184.3 L997.6,177.3 L1004.4,184.3 M992.7,182.3 V189.8 H995.9 V185.3 H999.3 V189.8 H1002.5 V182.3" fill="none" stroke="#333" stroke-width="1.6" stroke-linejoin="miter"/>
<path d="M1019,176 V190.5 M1011.8,183.2 H1026.2" stroke="#333" stroke-width="2.2"/>
<path d="M1031,182 H1037.5 L1034.25,185.5 Z" fill="#333"/>
<line x1="1045.5" y1="174" x2="1045.5" y2="193" stroke="#c8c8c8" stroke-width="1"/>
<rect x="1048" y="171.5" width="24" height="23.5" fill="#cdcdcd"/>
<path d="M1053,184 H1061 M1058.5,181.3 L1061.3,184 L1058.5,186.7" fill="none" stroke="#444" stroke-width="1.3"/>
<rect x="1063" y="176.8" width="4.6" height="14" fill="none" stroke="#333" stroke-width="1.8"/>
<line x1="1074.5" y1="174" x2="1074.5" y2="193" stroke="#c8c8c8" stroke-width="1"/>
<path d="M1083.5,181.2 A6.2,6.2 0 0 1 1095,180.3 M1095.3,185.3 A6.2,6.2 0 0 1 1083.8,186.2" fill="none" stroke="#333" stroke-width="1.7"/>
<path d="M1092.4,180.6 L1097,181.6 L1097,176.8 Z M1086.4,185.6 L1081.8,184.6 L1081.8,189.4 Z" fill="#333"/>
<circle cx="1115" cy="181.8" r="5" fill="none" stroke="#333" stroke-width="2.2"/>
<line x1="1111.2" y1="185.6" x2="1106.5" y2="190.3" stroke="#333" stroke-width="3"/>
<line x1="1127.5" y1="174" x2="1127.5" y2="193" stroke="#c8c8c8" stroke-width="1"/>
<path d="M1137,180 A6.5,6.5 0 1 1 1142.5,189.5" fill="none" stroke="#aaa" stroke-width="1.8"/>
<path d="M1135,176.5 L1135.2,183.3 L1141.4,181.3 Z" fill="#aaa"/>
<path d="M1172,180 A6.5,6.5 0 1 0 1166.5,189.5" fill="none" stroke="#aaa" stroke-width="1.8"/>
<path d="M1174,176.5 L1173.8,183.3 L1167.6,181.3 Z" fill="#aaa"/>
<line x1="1180.8" y1="174" x2="1180.8" y2="193" stroke="#b4bcc8" stroke-width="1.5"/>
<path d="M1188,176 L1202.7,190.8 M1202.7,176 L1188,190.8" stroke="#a8a8a8" stroke-width="1.8"/>
<line x1="1210" y1="174" x2="1210" y2="193" stroke="#c8c8c8" stroke-width="1"/>
<rect x="1233" y="184.2" width="7" height="1.4" fill="#222"/>
<path d="M1233,187.6 H1240 V188.6 L1236.5,192.4 L1233,188.6 Z" fill="#222"/>
<text x="964" y="216.5" font-size="13.5" fill="#222" textLength="34.00" lengthAdjust="spacingAndGlyphs">Home</text>
<path d="M1232.5,210.3 H1238.5 L1235.5,214 Z" fill="#222"/>
<text x="991" y="243.4" font-size="12" fill="#222" textLength="65.50" lengthAdjust="spacingAndGlyphs">All Variables</text>
<text x="991" y="266.3" font-size="12" fill="#222" textLength="74.50" lengthAdjust="spacingAndGlyphs">Questionnaire</text>
<text x="991" y="289.2" font-size="12" fill="#222" textLength="43.50" lengthAdjust="spacingAndGlyphs">Lookups</text>
<text x="991" y="312" font-size="12" fill="#222" textLength="50.50" lengthAdjust="spacingAndGlyphs">Warnings</text>
<text x="991" y="334.9" font-size="12" fill="#222" textLength="50.50" lengthAdjust="spacingAndGlyphs">Functions</text>
<path d="M961.6,234 Q961.6,232.4 963.2,232.4 H967.5 L969,233.8 H976.3 Q977.9,233.8 977.9,235.4 V245 Q977.9,246.4 976.3,246.4 H963.2 Q961.6,246.4 961.6,245 Z" fill="#ecc57f"/>
<circle cx="970" cy="262.5" r="8" fill="#3f7fc0"/>
<text x="970" y="266.6" font-size="11.5" font-weight="bold" fill="#fff" text-anchor="middle">?</text>
<rect x="962.0" y="280.5" width="4.5" height="4.5" fill="#444"/>
<rect x="968.2" y="280.5" width="4.5" height="4.5" fill="#444"/>
<rect x="974.4" y="280.5" width="4.5" height="4.5" fill="#444"/>
<rect x="962.0" y="286.5" width="4.5" height="4.5" fill="#e8b86a"/>
<rect x="968.2" y="286.5" width="4.5" height="4.5" fill="#444"/>
<rect x="974.4" y="286.5" width="4.5" height="4.5" fill="#444"/>
<path d="M970,301.5 L978.3,316 H961.7 Z" fill="#d9541e" stroke="#d9541e" stroke-width="1.2" stroke-linejoin="round"/>
<rect x="969.1" y="305.5" width="1.8" height="5.5" fill="#fff"/>
<rect x="969.1" y="312.2" width="1.8" height="1.8" fill="#fff"/>
<text x="961.5" y="335.5" font-size="15.5" font-style="italic" font-family="Liberation Serif" fill="#3b78b8" stroke="#3b78b8" stroke-width="0.3" textLength="15.5" lengthAdjust="spacingAndGlyphs">fx</text>
<circle cx="969.5" cy="791.8" r="9" fill="none" stroke="#444" stroke-width="1.2"/>
<path d="M965.8,793.8 L969.5,790 L973.2,793.8" fill="none" stroke="#222" stroke-width="2"/>
<text x="989" y="795.6" font-size="12.5" fill="#222" textLength="19.50" lengthAdjust="spacingAndGlyphs">Idle</text>
<circle cx="1208.4" cy="792" r="3.9" fill="#cbd0d6"/>
<circle cx="1220.6" cy="792" r="3.9" fill="#cbd0d6"/>
<circle cx="1232.8" cy="792" r="3.9" fill="#5f9d82"/>
</svg>
</body></html>
